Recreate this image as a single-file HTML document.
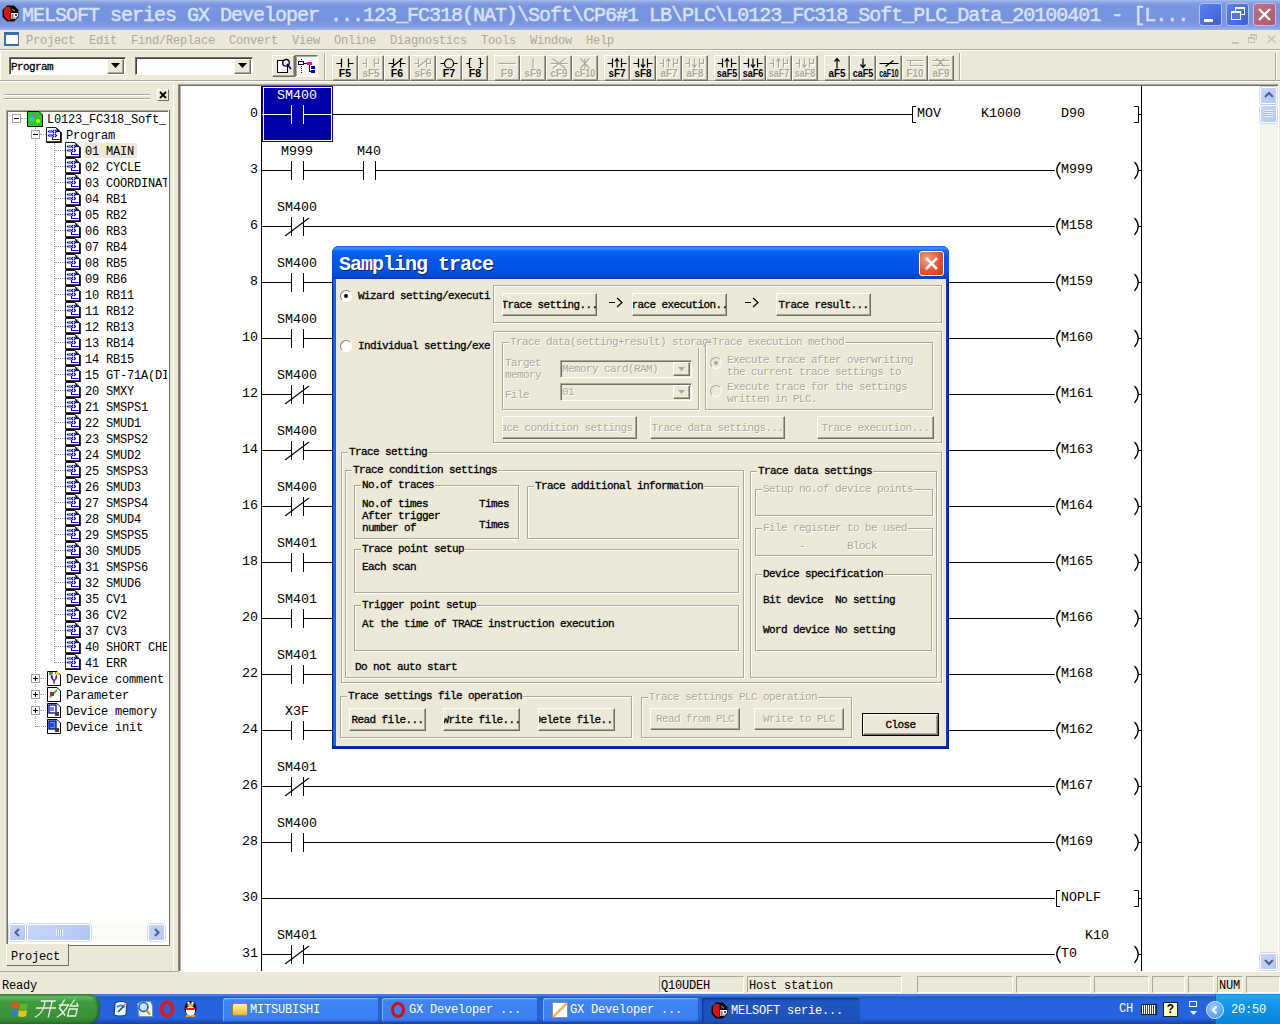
<!DOCTYPE html><html><head><meta charset="utf-8"><title>MELSOFT</title><style>
*{margin:0;padding:0;box-sizing:border-box}
html,body{width:1280px;height:1024px;overflow:hidden;background:#ECE9D8;position:relative;font-family:"Liberation Mono",monospace}
.a{position:absolute}
.t{position:absolute;white-space:pre;line-height:16px}
.raised{position:absolute;background:#ECE9D8;border:1px solid;border-color:#fff #716F64 #716F64 #fff;box-shadow:inset -1px -1px #ACA899}
.sunk{position:absolute;border:1px solid;border-color:#ACA899 #fff #fff #ACA899}
.grp{position:absolute;border:1px solid #ACA899;box-shadow:inset 1px 1px #fff,1px 1px #fff}
.gl{position:absolute;background:#ECE9D8;white-space:pre;line-height:12px;padding:0 1px}
.df{font-size:11px;letter-spacing:-0.6px;-webkit-text-stroke:0.3px currentColor}
.dis{color:#ACA899;text-shadow:1px 1px #fff;-webkit-text-stroke:0}
.lad{font-size:13.33px;letter-spacing:0;color:#000}
.tr{font-size:12px;letter-spacing:-0.2px}
</style></head><body>
<div class="a" style="left:0;top:0;width:1280px;height:30px;background:linear-gradient(#A8BCEB 0,#8CA7E4 2px,#7A96DF 5px,#7592DE 20px,#809BE2 26px,#96AEE8 29px)"></div>
<svg class="a" style="left:2px;top:5px" width="17" height="17"><path d="M5 0.5H12L16.5 5V12L12 16.5H5L0.5 12V5Z" fill="#100808"/><path d="M4 2H8.5V15H6L2 11V5Z" fill="#E01010"/><path d="M9 8H16V11L13 14H9Z" fill="#F4F0EC"/><rect x="9.5" y="9" width="2" height="5" fill="#7080A0"/><circle cx="14" cy="10" r="1" fill="#101010"/><path d="M12 12.5L14 14" stroke="#C08020" stroke-width="1.5"/><path d="M10 4L13 6" stroke="#80C080"/></svg>
<div class="t" style="left:22px;top:4px;line-height:24px;font-size:20px;letter-spacing:-1px;-webkit-text-stroke:0.5px #D8E2F8;color:#D8E2F8">MELSOFT series GX Developer ...123_FC318(NAT)\Soft\CP6#1 LB\PLC\L0123_FC318_Soft_PLC_Data_20100401 - [L...</div>
<div class="a" style="left:1199px;top:3px;width:23px;height:23px;border-radius:3px;border:1px solid #B0C2EE;background:linear-gradient(135deg,#5A80EA,#3C60D8)"></div>
<div class="a" style="left:1226px;top:3px;width:23px;height:23px;border-radius:3px;border:1px solid #B0C2EE;background:linear-gradient(135deg,#5A80EA,#3C60D8)"></div>
<div class="a" style="left:1253px;top:3px;width:23px;height:23px;border-radius:3px;border:1px solid #B0C2EE;background:linear-gradient(135deg,#C87080,#B05868)"></div>
<div class="a" style="left:1204px;top:19px;width:9px;height:3px;background:#fff"></div>
<div class="a" style="left:1235px;top:7px;width:10px;height:8px;border:1px solid #fff;border-top-width:2px"></div>
<div class="a" style="left:1231px;top:11px;width:10px;height:9px;border:1px solid #fff;border-top-width:2px;background:#5676D8"></div>
<svg class="a" style="left:1253px;top:3px" width="23" height="23"><path d="M6 6L17 17M17 6L6 17" stroke="#fff" stroke-width="2.4"/></svg>
<div class="a" style="left:4px;top:32px;width:15px;height:14px;background:#fff;border:2px solid #3A6EA5;border-top-width:3px;border-right-width:1px;border-bottom-width:2px"></div>
<div class="t tr" style="left:26px;top:33px;color:#ACA899">Project  Edit  Find/Replace  Convert  View  Online  Diagnostics  Tools  Window  Help</div>
<div class="a" style="left:1232px;top:42px;width:7px;height:2px;background:#C8C4B4"></div>
<div class="a" style="left:1250px;top:34px;width:7px;height:6px;border:1px solid #C8C4B4;border-top-width:2px"></div>
<div class="a" style="left:1248px;top:37px;width:7px;height:6px;border:1px solid #C8C4B4;border-top-width:2px;background:#ECE9D8"></div>
<svg class="a" style="left:1266px;top:34px" width="11" height="10"><path d="M1.5 1.5L9.5 8.5M9.5 1.5L1.5 8.5" stroke="#C8C4B4" stroke-width="1.6"/></svg>
<div class="a" style="left:0;top:49px;width:1280px;height:1px;background:#ACA899"></div>
<div class="a" style="left:0;top:50px;width:1280px;height:1px;background:#fff"></div>
<div class="a" style="left:0;top:80px;width:1280px;height:1px;background:#ACA899"></div>
<div class="a" style="left:0;top:81px;width:1280px;height:1px;background:#fff"></div>
<div class="a" style="left:0;top:52px;width:1px;height:28px;background:#fff"></div>
<div class="a" style="left:9px;top:57px;width:117px;height:18px;background:#fff;border:1px solid;border-color:#716F64 #fff #fff #716F64;box-shadow:inset 1px 1px #404040"></div>
<div class="raised" style="left:107px;top:59px;width:17px;height:15px"></div>
<svg class="a" style="left:111px;top:63px" width="9" height="6"><path d="M0 0H9L4.5 5Z" fill="#000"/></svg>
<div class="t df" style="left:11px;top:61px;line-height:12px;color:#000">Program</div>
<div class="a" style="left:135px;top:57px;width:118px;height:18px;background:#fff;border:1px solid;border-color:#716F64 #fff #fff #716F64;box-shadow:inset 1px 1px #404040"></div>
<div class="raised" style="left:234px;top:59px;width:17px;height:15px"></div>
<svg class="a" style="left:238px;top:63px" width="9" height="6"><path d="M0 0H9L4.5 5Z" fill="#000"/></svg>
<div class="raised" style="left:272px;top:55px;width:23px;height:22px"></div>
<svg class="a" style="left:272px;top:55px" width="23" height="22" shape-rendering="crispEdges"><rect x="5.5" y="5.5" width="10" height="12" fill="#fff" stroke="#000" stroke-width="1.6"/><circle cx="14" cy="7.8" r="3.3" fill="#fff" stroke="#000040" stroke-width="1.4" shape-rendering="auto"/><path d="M15 9L19 14" stroke="#000040" stroke-width="1.6" shape-rendering="auto"/></svg>
<div class="a" style="left:295px;top:55px;width:23px;height:22px;border:1px solid;border-color:#716F64 #fff #fff #716F64;box-shadow:inset 1px 1px #ACA899;background:repeating-conic-gradient(#F4F2EA 0 25%,#fff 0 50%) 0 0/2px 2px"></div>
<svg class="a" style="left:295px;top:55px" width="23" height="22" shape-rendering="crispEdges"><path d="M6 4h1v1h-1zM6 9h1v1h-1zM6 11h1v1h-1zM6 13h1v1h-1zM6 15h1v1h-1zM6 17h1v1h-1z" fill="#000040"/><rect x="3.5" y="6.5" width="5" height="3" fill="#fff" stroke="#000060"/><path d="M9 8H12" stroke="#000060"/><rect x="12" y="7" width="5" height="2.5" fill="#FF00CC"/><path d="M14.5 9.5V16.5H16" stroke="#000060" fill="none"/><rect x="16" y="11" width="4" height="3" fill="#0000C0"/><rect x="16" y="15" width="4" height="3" fill="#0000C0"/></svg>
<div class="a" style="left:324px;top:53px;width:1px;height:27px;background:#ACA899"></div>
<div class="a" style="left:325px;top:53px;width:1px;height:27px;background:#fff"></div>
<div class="raised" style="left:332px;top:55px;width:26px;height:26px"></div>
<svg class="a" style="left:333px;top:57px" width="24" height="12"><g transform="translate(0.5,0.5)"><path d="M3 6H8M8 1V10M15 1V10M15 6H20" stroke="#000" stroke-width="1.2" fill="none"/></g></svg>
<div class="t" style="left:332px;top:67px;width:26px;display:flex;justify-content:center;line-height:10px;font:bold 10.5px 'Liberation Sans', sans-serif;color:#000"><span style="display:inline-block;transform:scaleX(1.000)">F5</span></div>
<div class="raised" style="left:358px;top:55px;width:26px;height:26px"></div>
<svg class="a" style="left:359px;top:57px" width="24" height="12"><g transform="translate(0.5,0.5)"><g transform="translate(1,1)"><path d="M7 1V6H3M7 6V10M15 1V10M15 6H19V1" stroke="#fff" stroke-width="1.2" fill="none"/></g><path d="M7 1V6H3M7 6V10M15 1V10M15 6H19V1" stroke="#ACA899" stroke-width="1.2" fill="none"/></g></svg>
<div class="t" style="left:358px;top:67px;width:26px;display:flex;justify-content:center;line-height:10px;font:bold 10.5px 'Liberation Sans', sans-serif;color:#ACA899;text-shadow:1px 1px #fff"><span style="display:inline-block;transform:scaleX(0.940)">sF5</span></div>
<div class="raised" style="left:384px;top:55px;width:26px;height:26px"></div>
<svg class="a" style="left:385px;top:57px" width="24" height="12"><g transform="translate(0.5,0.5)"><path d="M3 6H8M8 1V10M15 1V10M15 6H20M6 10L17 1" stroke="#000" stroke-width="1.2" fill="none"/></g></svg>
<div class="t" style="left:384px;top:67px;width:26px;display:flex;justify-content:center;line-height:10px;font:bold 10.5px 'Liberation Sans', sans-serif;color:#000"><span style="display:inline-block;transform:scaleX(1.000)">F6</span></div>
<div class="raised" style="left:410px;top:55px;width:26px;height:26px"></div>
<svg class="a" style="left:411px;top:57px" width="24" height="12"><g transform="translate(0.5,0.5)"><g transform="translate(1,1)"><path d="M7 1V6H3M7 6V10M15 1V10M15 6H19V1M6 10L17 1" stroke="#fff" stroke-width="1.2" fill="none"/></g><path d="M7 1V6H3M7 6V10M15 1V10M15 6H19V1M6 10L17 1" stroke="#ACA899" stroke-width="1.2" fill="none"/></g></svg>
<div class="t" style="left:410px;top:67px;width:26px;display:flex;justify-content:center;line-height:10px;font:bold 10.5px 'Liberation Sans', sans-serif;color:#ACA899;text-shadow:1px 1px #fff"><span style="display:inline-block;transform:scaleX(0.940)">sF6</span></div>
<div class="raised" style="left:436px;top:55px;width:26px;height:26px"></div>
<svg class="a" style="left:437px;top:57px" width="24" height="12"><g transform="translate(0.5,0.5)"><path d="M3 6H7M16 6H20" stroke="#000" stroke-width="1.2" fill="none"/><circle cx="11.5" cy="6" r="4.5" stroke="#000" stroke-width="1.2" fill="none"/></g></svg>
<div class="t" style="left:436px;top:67px;width:26px;display:flex;justify-content:center;line-height:10px;font:bold 10.5px 'Liberation Sans', sans-serif;color:#000"><span style="display:inline-block;transform:scaleX(1.000)">F7</span></div>
<div class="raised" style="left:462px;top:55px;width:26px;height:26px"></div>
<svg class="a" style="left:463px;top:57px" width="24" height="12"><g transform="translate(0.5,0.5)"><path d="M3 6H6M6 1H8M6 1V10H8M15 1H17V10H15M17 6H20" stroke="#000" stroke-width="1.2" fill="none"/></g></svg>
<div class="t" style="left:462px;top:67px;width:26px;display:flex;justify-content:center;line-height:10px;font:bold 10.5px 'Liberation Sans', sans-serif;color:#000"><span style="display:inline-block;transform:scaleX(1.000)">F8</span></div>
<div class="raised" style="left:494px;top:55px;width:26px;height:26px"></div>
<svg class="a" style="left:495px;top:57px" width="24" height="12"><g transform="translate(0.5,0.5)"><g transform="translate(1,1)"><path d="M3 6H20" stroke="#fff" stroke-width="1.2" fill="none"/></g><path d="M3 6H20" stroke="#ACA899" stroke-width="1.2" fill="none"/></g></svg>
<div class="t" style="left:494px;top:67px;width:26px;display:flex;justify-content:center;line-height:10px;font:bold 10.5px 'Liberation Sans', sans-serif;color:#ACA899;text-shadow:1px 1px #fff"><span style="display:inline-block;transform:scaleX(1.000)">F9</span></div>
<div class="raised" style="left:520px;top:55px;width:26px;height:26px"></div>
<svg class="a" style="left:521px;top:57px" width="24" height="12"><g transform="translate(0.5,0.5)"><g transform="translate(1,1)"><path d="M11.5 1V11" stroke="#fff" stroke-width="1.2" fill="none"/></g><path d="M11.5 1V11" stroke="#ACA899" stroke-width="1.2" fill="none"/></g></svg>
<div class="t" style="left:520px;top:67px;width:26px;display:flex;justify-content:center;line-height:10px;font:bold 10.5px 'Liberation Sans', sans-serif;color:#ACA899;text-shadow:1px 1px #fff"><span style="display:inline-block;transform:scaleX(0.940)">sF9</span></div>
<div class="raised" style="left:546px;top:55px;width:26px;height:26px"></div>
<svg class="a" style="left:547px;top:57px" width="24" height="12"><g transform="translate(0.5,0.5)"><g transform="translate(1,1)"><path d="M3 6H20M5 1L18 11M5 11L18 1" stroke="#fff" stroke-width="1.2" fill="none"/></g><path d="M3 6H20M5 1L18 11M5 11L18 1" stroke="#ACA899" stroke-width="1.2" fill="none"/></g></svg>
<div class="t" style="left:546px;top:67px;width:26px;display:flex;justify-content:center;line-height:10px;font:bold 10.5px 'Liberation Sans', sans-serif;color:#ACA899;text-shadow:1px 1px #fff"><span style="display:inline-block;transform:scaleX(0.940)">cF9</span></div>
<div class="raised" style="left:572px;top:55px;width:26px;height:26px"></div>
<svg class="a" style="left:573px;top:57px" width="24" height="12"><g transform="translate(0.5,0.5)"><g transform="translate(1,1)"><path d="M7 1L16 11M7 11L16 1M11.5 1V11" stroke="#fff" stroke-width="1.2" fill="none"/></g><path d="M7 1L16 11M7 11L16 1M11.5 1V11" stroke="#ACA899" stroke-width="1.2" fill="none"/></g></svg>
<div class="t" style="left:572px;top:67px;width:26px;display:flex;justify-content:center;line-height:10px;font:bold 10.5px 'Liberation Sans', sans-serif;color:#ACA899;text-shadow:1px 1px #fff"><span style="display:inline-block;transform:scaleX(0.857)">cF10</span></div>
<div class="raised" style="left:604px;top:55px;width:26px;height:26px"></div>
<svg class="a" style="left:605px;top:57px" width="24" height="12"><g transform="translate(0.5,0.5)"><path d="M2 6H7M7 1V10M16 1V10M16 6H21M11.5 10V2M9.5 4L11.5 1L13.5 4" stroke="#000" stroke-width="1.2" fill="none"/></g></svg>
<div class="t" style="left:604px;top:67px;width:26px;display:flex;justify-content:center;line-height:10px;font:bold 10.5px 'Liberation Sans', sans-serif;color:#000"><span style="display:inline-block;transform:scaleX(0.940)">sF7</span></div>
<div class="raised" style="left:630px;top:55px;width:26px;height:26px"></div>
<svg class="a" style="left:631px;top:57px" width="24" height="12"><g transform="translate(0.5,0.5)"><path d="M2 6H7M7 1V10M16 1V10M16 6H21M11.5 1V9M9.5 7L11.5 10L13.5 7" stroke="#000" stroke-width="1.2" fill="none"/></g></svg>
<div class="t" style="left:630px;top:67px;width:26px;display:flex;justify-content:center;line-height:10px;font:bold 10.5px 'Liberation Sans', sans-serif;color:#000"><span style="display:inline-block;transform:scaleX(0.940)">sF8</span></div>
<div class="raised" style="left:656px;top:55px;width:26px;height:26px"></div>
<svg class="a" style="left:657px;top:57px" width="24" height="12"><g transform="translate(0.5,0.5)"><g transform="translate(1,1)"><path d="M6 1V6H2M6 6V10M16 1V10M16 6H20V1M11 10V2M9 4L11 1L13 4" stroke="#fff" stroke-width="1.2" fill="none"/></g><path d="M6 1V6H2M6 6V10M16 1V10M16 6H20V1M11 10V2M9 4L11 1L13 4" stroke="#ACA899" stroke-width="1.2" fill="none"/></g></svg>
<div class="t" style="left:656px;top:67px;width:26px;display:flex;justify-content:center;line-height:10px;font:bold 10.5px 'Liberation Sans', sans-serif;color:#ACA899;text-shadow:1px 1px #fff"><span style="display:inline-block;transform:scaleX(0.940)">aF7</span></div>
<div class="raised" style="left:682px;top:55px;width:26px;height:26px"></div>
<svg class="a" style="left:683px;top:57px" width="24" height="12"><g transform="translate(0.5,0.5)"><g transform="translate(1,1)"><path d="M6 1V6H2M6 6V10M16 1V10M16 6H20V1M11 1V9M9 7L11 10L13 7" stroke="#fff" stroke-width="1.2" fill="none"/></g><path d="M6 1V6H2M6 6V10M16 1V10M16 6H20V1M11 1V9M9 7L11 10L13 7" stroke="#ACA899" stroke-width="1.2" fill="none"/></g></svg>
<div class="t" style="left:682px;top:67px;width:26px;display:flex;justify-content:center;line-height:10px;font:bold 10.5px 'Liberation Sans', sans-serif;color:#ACA899;text-shadow:1px 1px #fff"><span style="display:inline-block;transform:scaleX(0.940)">aF8</span></div>
<div class="raised" style="left:714px;top:55px;width:26px;height:26px"></div>
<svg class="a" style="left:715px;top:57px" width="24" height="12"><g transform="translate(0.5,0.5)"><path d="M2 6H7M7 1V10M16 1V10M16 6H21M11.5 10V2M9.5 4L11.5 1L13.5 4" stroke="#000" stroke-width="1.2" fill="none"/></g></svg>
<div class="t" style="left:714px;top:67px;width:26px;display:flex;justify-content:center;line-height:10px;font:bold 10.5px 'Liberation Sans', sans-serif;color:#000"><span style="display:inline-block;transform:scaleX(0.857)">saF5</span></div>
<div class="raised" style="left:740px;top:55px;width:26px;height:26px"></div>
<svg class="a" style="left:741px;top:57px" width="24" height="12"><g transform="translate(0.5,0.5)"><path d="M2 6H7M7 1V10M16 1V10M16 6H21M11.5 1V9M9.5 7L11.5 10L13.5 7" stroke="#000" stroke-width="1.2" fill="none"/></g></svg>
<div class="t" style="left:740px;top:67px;width:26px;display:flex;justify-content:center;line-height:10px;font:bold 10.5px 'Liberation Sans', sans-serif;color:#000"><span style="display:inline-block;transform:scaleX(0.857)">saF6</span></div>
<div class="raised" style="left:766px;top:55px;width:26px;height:26px"></div>
<svg class="a" style="left:767px;top:57px" width="24" height="12"><g transform="translate(0.5,0.5)"><g transform="translate(1,1)"><path d="M6 1V6H2M6 6V10M16 1V10M16 6H20V1M11 10V2M9 4L11 1L13 4" stroke="#fff" stroke-width="1.2" fill="none"/></g><path d="M6 1V6H2M6 6V10M16 1V10M16 6H20V1M11 10V2M9 4L11 1L13 4" stroke="#ACA899" stroke-width="1.2" fill="none"/></g></svg>
<div class="t" style="left:766px;top:67px;width:26px;display:flex;justify-content:center;line-height:10px;font:bold 10.5px 'Liberation Sans', sans-serif;color:#ACA899;text-shadow:1px 1px #fff"><span style="display:inline-block;transform:scaleX(0.857)">saF7</span></div>
<div class="raised" style="left:792px;top:55px;width:26px;height:26px"></div>
<svg class="a" style="left:793px;top:57px" width="24" height="12"><g transform="translate(0.5,0.5)"><g transform="translate(1,1)"><path d="M6 1V6H2M6 6V10M16 1V10M16 6H20V1M11 1V9M9 7L11 10L13 7" stroke="#fff" stroke-width="1.2" fill="none"/></g><path d="M6 1V6H2M6 6V10M16 1V10M16 6H20V1M11 1V9M9 7L11 10L13 7" stroke="#ACA899" stroke-width="1.2" fill="none"/></g></svg>
<div class="t" style="left:792px;top:67px;width:26px;display:flex;justify-content:center;line-height:10px;font:bold 10.5px 'Liberation Sans', sans-serif;color:#ACA899;text-shadow:1px 1px #fff"><span style="display:inline-block;transform:scaleX(0.857)">saF8</span></div>
<div class="raised" style="left:824px;top:55px;width:26px;height:26px"></div>
<svg class="a" style="left:825px;top:57px" width="24" height="12"><g transform="translate(0.5,0.5)"><path d="M11.5 11V1M9 4L11.5 1L14 4" stroke="#000" stroke-width="1.2" fill="none"/></g></svg>
<div class="t" style="left:824px;top:67px;width:26px;display:flex;justify-content:center;line-height:10px;font:bold 10.5px 'Liberation Sans', sans-serif;color:#000"><span style="display:inline-block;transform:scaleX(0.940)">aF5</span></div>
<div class="raised" style="left:850px;top:55px;width:26px;height:26px"></div>
<svg class="a" style="left:851px;top:57px" width="24" height="12"><g transform="translate(0.5,0.5)"><path d="M11.5 1V10M9 7L11.5 10L14 7" stroke="#000" stroke-width="1.2" fill="none"/></g></svg>
<div class="t" style="left:850px;top:67px;width:26px;display:flex;justify-content:center;line-height:10px;font:bold 10.5px 'Liberation Sans', sans-serif;color:#000"><span style="display:inline-block;transform:scaleX(0.857)">caF5</span></div>
<div class="raised" style="left:876px;top:55px;width:26px;height:26px"></div>
<svg class="a" style="left:877px;top:57px" width="24" height="12"><g transform="translate(0.5,0.5)"><path d="M2 6H21M8 9L16 3" stroke="#000" stroke-width="1.2" fill="none"/></g></svg>
<div class="t" style="left:876px;top:67px;width:26px;display:flex;justify-content:center;line-height:10px;font:bold 10.5px 'Liberation Sans', sans-serif;color:#000"><span style="display:inline-block;transform:scaleX(0.655)">caF10</span></div>
<div class="raised" style="left:902px;top:55px;width:26px;height:26px"></div>
<svg class="a" style="left:903px;top:57px" width="24" height="12"><g transform="translate(0.5,0.5)"><g transform="translate(1,1)"><path d="M3 3H20M7 3V8H20" stroke="#fff" stroke-width="1.2" fill="none"/></g><path d="M3 3H20M7 3V8H20" stroke="#ACA899" stroke-width="1.2" fill="none"/></g></svg>
<div class="t" style="left:902px;top:67px;width:26px;display:flex;justify-content:center;line-height:10px;font:bold 10.5px 'Liberation Sans', sans-serif;color:#ACA899;text-shadow:1px 1px #fff"><span style="display:inline-block;transform:scaleX(0.940)">F10</span></div>
<div class="raised" style="left:928px;top:55px;width:26px;height:26px"></div>
<svg class="a" style="left:929px;top:57px" width="24" height="12"><g transform="translate(0.5,0.5)"><g transform="translate(1,1)"><path d="M3 3H20M7 1L15 9M15 1L7 9M3 8H20" stroke="#fff" stroke-width="1.2" fill="none"/></g><path d="M3 3H20M7 1L15 9M15 1L7 9M3 8H20" stroke="#ACA899" stroke-width="1.2" fill="none"/></g></svg>
<div class="t" style="left:928px;top:67px;width:26px;display:flex;justify-content:center;line-height:10px;font:bold 10.5px 'Liberation Sans', sans-serif;color:#ACA899;text-shadow:1px 1px #fff"><span style="display:inline-block;transform:scaleX(0.940)">aF9</span></div>
<div class="a" style="left:959px;top:53px;width:1px;height:27px;background:#ACA899"></div>
<div class="a" style="left:960px;top:53px;width:1px;height:27px;background:#fff"></div>
<div class="a" style="left:1275px;top:53px;width:1px;height:27px;background:#ACA899"></div>
<div class="a" style="left:1276px;top:53px;width:1px;height:27px;background:#fff"></div>
<div class="a" style="left:4px;top:94px;width:146px;height:1px;background:#ACA899"></div>
<div class="a" style="left:4px;top:95px;width:146px;height:1px;background:#fff"></div>
<div class="a" style="left:4px;top:98px;width:146px;height:1px;background:#ACA899"></div>
<div class="a" style="left:4px;top:99px;width:146px;height:1px;background:#fff"></div>
<div class="raised" style="left:157px;top:89px;width:12px;height:12px;box-shadow:none"></div>
<svg class="a" style="left:158px;top:90px" width="10" height="10"><path d="M2 2L8 8M8 2L2 8" stroke="#000" stroke-width="1.8"/></svg>
<div class="a" style="left:6px;top:110px;width:163px;height:835px;background:#fff;border:1px solid;border-color:#ACA899 #fff #fff #ACA899;box-shadow:inset 1px 1px #716F64"></div>
<div class="a" style="left:35px;top:127px;width:0;height:600px;border-left:1px dotted #A0A0A0"></div>
<div class="a" style="left:54px;top:143px;width:0;height:520px;border-left:1px dotted #A0A0A0"></div>
<div class="a" style="left:21px;top:118px;width:6px;height:0;border-top:1px dotted #A0A0A0"></div>
<div class="a" style="left:12px;top:114px;width:9px;height:9px;border:1px solid #A0A0A0;background:#fff"></div>
<div class="a" style="left:14px;top:118px;width:5px;height:1px;background:#000"></div>
<svg class="a" style="left:27px;top:111px" width="16" height="16"><path d="M0.5 0.5H12L15.5 4V15.5H0.5Z" fill="#22D022" stroke="#000"/><path d="M2 8L5 5L8 8L5 11Z" fill="#30C0E0"/><circle cx="7" cy="4" r="1.8" fill="#E040E0"/><circle cx="11" cy="10" r="2" fill="#F0E020"/></svg>
<div class="t tr" style="left:47px;top:112px;color:#000">L0123_FC318_Soft_</div>
<div class="a" style="left:31px;top:130px;width:9px;height:9px;border:1px solid #A0A0A0;background:#fff"></div>
<div class="a" style="left:33px;top:134px;width:5px;height:1px;background:#000"></div>
<div class="a" style="left:40px;top:134px;width:6px;height:0;border-top:1px dotted #A0A0A0"></div>
<svg class="a" style="left:46px;top:127px" width="16" height="16"><path d="M0.5 0.5H10L14.5 5V15.5H0.5Z" fill="#fff" stroke="#202020"/><path d="M1 15H15.5M15 5V16" stroke="#000" stroke-width="1.6"/><path d="M10 0.5L14.5 5H11Z" fill="#000"/><g fill="#0000C8"><path d="M1.5 4.5L3.5 2.8V6.2Z"/><path d="M1.5 8.5L3.5 6.8V10.2Z"/><rect x="4.5" y="3" width="1" height="3"/><rect x="4.5" y="7" width="1" height="3"/></g><path d="M8 3L6.5 4.5L8 6M9 3L10.5 4.5L9 6M11 4.5H13.5M8 7L6.5 8.5L8 10M9 7L10.5 8.5L9 10M6.5 10V12.5H13.5" stroke="#0000C8" stroke-width="1.1" fill="none"/></svg>
<div class="t tr" style="left:66px;top:128px;color:#000">Program</div>
<div class="a" style="left:55px;top:150px;width:10px;height:0;border-top:1px dotted #A0A0A0"></div>
<svg class="a" style="left:65px;top:142px" width="16" height="16"><path d="M0.5 0.5H10L14.5 5V15.5H0.5Z" fill="#fff" stroke="#202020"/><path d="M1 15H15.5M15 5V16" stroke="#000" stroke-width="1.6"/><path d="M10 0.5L14.5 5H11Z" fill="#000"/><g fill="#0000C8"><path d="M1.5 4.5L3.5 2.8V6.2Z"/><path d="M1.5 8.5L3.5 6.8V10.2Z"/><rect x="4.5" y="3" width="1" height="3"/><rect x="4.5" y="7" width="1" height="3"/></g><path d="M8 3L6.5 4.5L8 6M9 3L10.5 4.5L9 6M11 4.5H13.5M8 7L6.5 8.5L8 10M9 7L10.5 8.5L9 10M6.5 10V12.5H13.5" stroke="#0000C8" stroke-width="1.1" fill="none"/></svg>
<div class="a" style="left:84px;top:143px;width:53px;height:15px;background:#ECE9D8"></div>
<div class="t tr" style="left:85px;top:144px;color:#000;width:82px;overflow:hidden">01 MAIN</div>
<div class="a" style="left:55px;top:166px;width:10px;height:0;border-top:1px dotted #A0A0A0"></div>
<svg class="a" style="left:65px;top:158px" width="16" height="16"><path d="M0.5 0.5H10L14.5 5V15.5H0.5Z" fill="#fff" stroke="#202020"/><path d="M1 15H15.5M15 5V16" stroke="#000" stroke-width="1.6"/><path d="M10 0.5L14.5 5H11Z" fill="#000"/><g fill="#0000C8"><path d="M1.5 4.5L3.5 2.8V6.2Z"/><path d="M1.5 8.5L3.5 6.8V10.2Z"/><rect x="4.5" y="3" width="1" height="3"/><rect x="4.5" y="7" width="1" height="3"/></g><path d="M8 3L6.5 4.5L8 6M9 3L10.5 4.5L9 6M11 4.5H13.5M8 7L6.5 8.5L8 10M9 7L10.5 8.5L9 10M6.5 10V12.5H13.5" stroke="#0000C8" stroke-width="1.1" fill="none"/></svg>
<div class="t tr" style="left:85px;top:160px;color:#000;width:82px;overflow:hidden">02 CYCLE</div>
<div class="a" style="left:55px;top:182px;width:10px;height:0;border-top:1px dotted #A0A0A0"></div>
<svg class="a" style="left:65px;top:174px" width="16" height="16"><path d="M0.5 0.5H10L14.5 5V15.5H0.5Z" fill="#fff" stroke="#202020"/><path d="M1 15H15.5M15 5V16" stroke="#000" stroke-width="1.6"/><path d="M10 0.5L14.5 5H11Z" fill="#000"/><g fill="#0000C8"><path d="M1.5 4.5L3.5 2.8V6.2Z"/><path d="M1.5 8.5L3.5 6.8V10.2Z"/><rect x="4.5" y="3" width="1" height="3"/><rect x="4.5" y="7" width="1" height="3"/></g><path d="M8 3L6.5 4.5L8 6M9 3L10.5 4.5L9 6M11 4.5H13.5M8 7L6.5 8.5L8 10M9 7L10.5 8.5L9 10M6.5 10V12.5H13.5" stroke="#0000C8" stroke-width="1.1" fill="none"/></svg>
<div class="t tr" style="left:85px;top:176px;color:#000;width:82px;overflow:hidden">03 COORDINAT</div>
<div class="a" style="left:55px;top:198px;width:10px;height:0;border-top:1px dotted #A0A0A0"></div>
<svg class="a" style="left:65px;top:190px" width="16" height="16"><path d="M0.5 0.5H10L14.5 5V15.5H0.5Z" fill="#fff" stroke="#202020"/><path d="M1 15H15.5M15 5V16" stroke="#000" stroke-width="1.6"/><path d="M10 0.5L14.5 5H11Z" fill="#000"/><g fill="#0000C8"><path d="M1.5 4.5L3.5 2.8V6.2Z"/><path d="M1.5 8.5L3.5 6.8V10.2Z"/><rect x="4.5" y="3" width="1" height="3"/><rect x="4.5" y="7" width="1" height="3"/></g><path d="M8 3L6.5 4.5L8 6M9 3L10.5 4.5L9 6M11 4.5H13.5M8 7L6.5 8.5L8 10M9 7L10.5 8.5L9 10M6.5 10V12.5H13.5" stroke="#0000C8" stroke-width="1.1" fill="none"/></svg>
<div class="t tr" style="left:85px;top:192px;color:#000;width:82px;overflow:hidden">04 RB1</div>
<div class="a" style="left:55px;top:214px;width:10px;height:0;border-top:1px dotted #A0A0A0"></div>
<svg class="a" style="left:65px;top:206px" width="16" height="16"><path d="M0.5 0.5H10L14.5 5V15.5H0.5Z" fill="#fff" stroke="#202020"/><path d="M1 15H15.5M15 5V16" stroke="#000" stroke-width="1.6"/><path d="M10 0.5L14.5 5H11Z" fill="#000"/><g fill="#0000C8"><path d="M1.5 4.5L3.5 2.8V6.2Z"/><path d="M1.5 8.5L3.5 6.8V10.2Z"/><rect x="4.5" y="3" width="1" height="3"/><rect x="4.5" y="7" width="1" height="3"/></g><path d="M8 3L6.5 4.5L8 6M9 3L10.5 4.5L9 6M11 4.5H13.5M8 7L6.5 8.5L8 10M9 7L10.5 8.5L9 10M6.5 10V12.5H13.5" stroke="#0000C8" stroke-width="1.1" fill="none"/></svg>
<div class="t tr" style="left:85px;top:208px;color:#000;width:82px;overflow:hidden">05 RB2</div>
<div class="a" style="left:55px;top:230px;width:10px;height:0;border-top:1px dotted #A0A0A0"></div>
<svg class="a" style="left:65px;top:222px" width="16" height="16"><path d="M0.5 0.5H10L14.5 5V15.5H0.5Z" fill="#fff" stroke="#202020"/><path d="M1 15H15.5M15 5V16" stroke="#000" stroke-width="1.6"/><path d="M10 0.5L14.5 5H11Z" fill="#000"/><g fill="#0000C8"><path d="M1.5 4.5L3.5 2.8V6.2Z"/><path d="M1.5 8.5L3.5 6.8V10.2Z"/><rect x="4.5" y="3" width="1" height="3"/><rect x="4.5" y="7" width="1" height="3"/></g><path d="M8 3L6.5 4.5L8 6M9 3L10.5 4.5L9 6M11 4.5H13.5M8 7L6.5 8.5L8 10M9 7L10.5 8.5L9 10M6.5 10V12.5H13.5" stroke="#0000C8" stroke-width="1.1" fill="none"/></svg>
<div class="t tr" style="left:85px;top:224px;color:#000;width:82px;overflow:hidden">06 RB3</div>
<div class="a" style="left:55px;top:246px;width:10px;height:0;border-top:1px dotted #A0A0A0"></div>
<svg class="a" style="left:65px;top:238px" width="16" height="16"><path d="M0.5 0.5H10L14.5 5V15.5H0.5Z" fill="#fff" stroke="#202020"/><path d="M1 15H15.5M15 5V16" stroke="#000" stroke-width="1.6"/><path d="M10 0.5L14.5 5H11Z" fill="#000"/><g fill="#0000C8"><path d="M1.5 4.5L3.5 2.8V6.2Z"/><path d="M1.5 8.5L3.5 6.8V10.2Z"/><rect x="4.5" y="3" width="1" height="3"/><rect x="4.5" y="7" width="1" height="3"/></g><path d="M8 3L6.5 4.5L8 6M9 3L10.5 4.5L9 6M11 4.5H13.5M8 7L6.5 8.5L8 10M9 7L10.5 8.5L9 10M6.5 10V12.5H13.5" stroke="#0000C8" stroke-width="1.1" fill="none"/></svg>
<div class="t tr" style="left:85px;top:240px;color:#000;width:82px;overflow:hidden">07 RB4</div>
<div class="a" style="left:55px;top:262px;width:10px;height:0;border-top:1px dotted #A0A0A0"></div>
<svg class="a" style="left:65px;top:254px" width="16" height="16"><path d="M0.5 0.5H10L14.5 5V15.5H0.5Z" fill="#fff" stroke="#202020"/><path d="M1 15H15.5M15 5V16" stroke="#000" stroke-width="1.6"/><path d="M10 0.5L14.5 5H11Z" fill="#000"/><g fill="#0000C8"><path d="M1.5 4.5L3.5 2.8V6.2Z"/><path d="M1.5 8.5L3.5 6.8V10.2Z"/><rect x="4.5" y="3" width="1" height="3"/><rect x="4.5" y="7" width="1" height="3"/></g><path d="M8 3L6.5 4.5L8 6M9 3L10.5 4.5L9 6M11 4.5H13.5M8 7L6.5 8.5L8 10M9 7L10.5 8.5L9 10M6.5 10V12.5H13.5" stroke="#0000C8" stroke-width="1.1" fill="none"/></svg>
<div class="t tr" style="left:85px;top:256px;color:#000;width:82px;overflow:hidden">08 RB5</div>
<div class="a" style="left:55px;top:278px;width:10px;height:0;border-top:1px dotted #A0A0A0"></div>
<svg class="a" style="left:65px;top:270px" width="16" height="16"><path d="M0.5 0.5H10L14.5 5V15.5H0.5Z" fill="#fff" stroke="#202020"/><path d="M1 15H15.5M15 5V16" stroke="#000" stroke-width="1.6"/><path d="M10 0.5L14.5 5H11Z" fill="#000"/><g fill="#0000C8"><path d="M1.5 4.5L3.5 2.8V6.2Z"/><path d="M1.5 8.5L3.5 6.8V10.2Z"/><rect x="4.5" y="3" width="1" height="3"/><rect x="4.5" y="7" width="1" height="3"/></g><path d="M8 3L6.5 4.5L8 6M9 3L10.5 4.5L9 6M11 4.5H13.5M8 7L6.5 8.5L8 10M9 7L10.5 8.5L9 10M6.5 10V12.5H13.5" stroke="#0000C8" stroke-width="1.1" fill="none"/></svg>
<div class="t tr" style="left:85px;top:272px;color:#000;width:82px;overflow:hidden">09 RB6</div>
<div class="a" style="left:55px;top:294px;width:10px;height:0;border-top:1px dotted #A0A0A0"></div>
<svg class="a" style="left:65px;top:286px" width="16" height="16"><path d="M0.5 0.5H10L14.5 5V15.5H0.5Z" fill="#fff" stroke="#202020"/><path d="M1 15H15.5M15 5V16" stroke="#000" stroke-width="1.6"/><path d="M10 0.5L14.5 5H11Z" fill="#000"/><g fill="#0000C8"><path d="M1.5 4.5L3.5 2.8V6.2Z"/><path d="M1.5 8.5L3.5 6.8V10.2Z"/><rect x="4.5" y="3" width="1" height="3"/><rect x="4.5" y="7" width="1" height="3"/></g><path d="M8 3L6.5 4.5L8 6M9 3L10.5 4.5L9 6M11 4.5H13.5M8 7L6.5 8.5L8 10M9 7L10.5 8.5L9 10M6.5 10V12.5H13.5" stroke="#0000C8" stroke-width="1.1" fill="none"/></svg>
<div class="t tr" style="left:85px;top:288px;color:#000;width:82px;overflow:hidden">10 RB11</div>
<div class="a" style="left:55px;top:310px;width:10px;height:0;border-top:1px dotted #A0A0A0"></div>
<svg class="a" style="left:65px;top:302px" width="16" height="16"><path d="M0.5 0.5H10L14.5 5V15.5H0.5Z" fill="#fff" stroke="#202020"/><path d="M1 15H15.5M15 5V16" stroke="#000" stroke-width="1.6"/><path d="M10 0.5L14.5 5H11Z" fill="#000"/><g fill="#0000C8"><path d="M1.5 4.5L3.5 2.8V6.2Z"/><path d="M1.5 8.5L3.5 6.8V10.2Z"/><rect x="4.5" y="3" width="1" height="3"/><rect x="4.5" y="7" width="1" height="3"/></g><path d="M8 3L6.5 4.5L8 6M9 3L10.5 4.5L9 6M11 4.5H13.5M8 7L6.5 8.5L8 10M9 7L10.5 8.5L9 10M6.5 10V12.5H13.5" stroke="#0000C8" stroke-width="1.1" fill="none"/></svg>
<div class="t tr" style="left:85px;top:304px;color:#000;width:82px;overflow:hidden">11 RB12</div>
<div class="a" style="left:55px;top:326px;width:10px;height:0;border-top:1px dotted #A0A0A0"></div>
<svg class="a" style="left:65px;top:318px" width="16" height="16"><path d="M0.5 0.5H10L14.5 5V15.5H0.5Z" fill="#fff" stroke="#202020"/><path d="M1 15H15.5M15 5V16" stroke="#000" stroke-width="1.6"/><path d="M10 0.5L14.5 5H11Z" fill="#000"/><g fill="#0000C8"><path d="M1.5 4.5L3.5 2.8V6.2Z"/><path d="M1.5 8.5L3.5 6.8V10.2Z"/><rect x="4.5" y="3" width="1" height="3"/><rect x="4.5" y="7" width="1" height="3"/></g><path d="M8 3L6.5 4.5L8 6M9 3L10.5 4.5L9 6M11 4.5H13.5M8 7L6.5 8.5L8 10M9 7L10.5 8.5L9 10M6.5 10V12.5H13.5" stroke="#0000C8" stroke-width="1.1" fill="none"/></svg>
<div class="t tr" style="left:85px;top:320px;color:#000;width:82px;overflow:hidden">12 RB13</div>
<div class="a" style="left:55px;top:342px;width:10px;height:0;border-top:1px dotted #A0A0A0"></div>
<svg class="a" style="left:65px;top:334px" width="16" height="16"><path d="M0.5 0.5H10L14.5 5V15.5H0.5Z" fill="#fff" stroke="#202020"/><path d="M1 15H15.5M15 5V16" stroke="#000" stroke-width="1.6"/><path d="M10 0.5L14.5 5H11Z" fill="#000"/><g fill="#0000C8"><path d="M1.5 4.5L3.5 2.8V6.2Z"/><path d="M1.5 8.5L3.5 6.8V10.2Z"/><rect x="4.5" y="3" width="1" height="3"/><rect x="4.5" y="7" width="1" height="3"/></g><path d="M8 3L6.5 4.5L8 6M9 3L10.5 4.5L9 6M11 4.5H13.5M8 7L6.5 8.5L8 10M9 7L10.5 8.5L9 10M6.5 10V12.5H13.5" stroke="#0000C8" stroke-width="1.1" fill="none"/></svg>
<div class="t tr" style="left:85px;top:336px;color:#000;width:82px;overflow:hidden">13 RB14</div>
<div class="a" style="left:55px;top:358px;width:10px;height:0;border-top:1px dotted #A0A0A0"></div>
<svg class="a" style="left:65px;top:350px" width="16" height="16"><path d="M0.5 0.5H10L14.5 5V15.5H0.5Z" fill="#fff" stroke="#202020"/><path d="M1 15H15.5M15 5V16" stroke="#000" stroke-width="1.6"/><path d="M10 0.5L14.5 5H11Z" fill="#000"/><g fill="#0000C8"><path d="M1.5 4.5L3.5 2.8V6.2Z"/><path d="M1.5 8.5L3.5 6.8V10.2Z"/><rect x="4.5" y="3" width="1" height="3"/><rect x="4.5" y="7" width="1" height="3"/></g><path d="M8 3L6.5 4.5L8 6M9 3L10.5 4.5L9 6M11 4.5H13.5M8 7L6.5 8.5L8 10M9 7L10.5 8.5L9 10M6.5 10V12.5H13.5" stroke="#0000C8" stroke-width="1.1" fill="none"/></svg>
<div class="t tr" style="left:85px;top:352px;color:#000;width:82px;overflow:hidden">14 RB15</div>
<div class="a" style="left:55px;top:374px;width:10px;height:0;border-top:1px dotted #A0A0A0"></div>
<svg class="a" style="left:65px;top:366px" width="16" height="16"><path d="M0.5 0.5H10L14.5 5V15.5H0.5Z" fill="#fff" stroke="#202020"/><path d="M1 15H15.5M15 5V16" stroke="#000" stroke-width="1.6"/><path d="M10 0.5L14.5 5H11Z" fill="#000"/><g fill="#0000C8"><path d="M1.5 4.5L3.5 2.8V6.2Z"/><path d="M1.5 8.5L3.5 6.8V10.2Z"/><rect x="4.5" y="3" width="1" height="3"/><rect x="4.5" y="7" width="1" height="3"/></g><path d="M8 3L6.5 4.5L8 6M9 3L10.5 4.5L9 6M11 4.5H13.5M8 7L6.5 8.5L8 10M9 7L10.5 8.5L9 10M6.5 10V12.5H13.5" stroke="#0000C8" stroke-width="1.1" fill="none"/></svg>
<div class="t tr" style="left:85px;top:368px;color:#000;width:82px;overflow:hidden">15 GT-71A(DI</div>
<div class="a" style="left:55px;top:390px;width:10px;height:0;border-top:1px dotted #A0A0A0"></div>
<svg class="a" style="left:65px;top:382px" width="16" height="16"><path d="M0.5 0.5H10L14.5 5V15.5H0.5Z" fill="#fff" stroke="#202020"/><path d="M1 15H15.5M15 5V16" stroke="#000" stroke-width="1.6"/><path d="M10 0.5L14.5 5H11Z" fill="#000"/><g fill="#0000C8"><path d="M1.5 4.5L3.5 2.8V6.2Z"/><path d="M1.5 8.5L3.5 6.8V10.2Z"/><rect x="4.5" y="3" width="1" height="3"/><rect x="4.5" y="7" width="1" height="3"/></g><path d="M8 3L6.5 4.5L8 6M9 3L10.5 4.5L9 6M11 4.5H13.5M8 7L6.5 8.5L8 10M9 7L10.5 8.5L9 10M6.5 10V12.5H13.5" stroke="#0000C8" stroke-width="1.1" fill="none"/></svg>
<div class="t tr" style="left:85px;top:384px;color:#000;width:82px;overflow:hidden">20 SMXY</div>
<div class="a" style="left:55px;top:406px;width:10px;height:0;border-top:1px dotted #A0A0A0"></div>
<svg class="a" style="left:65px;top:398px" width="16" height="16"><path d="M0.5 0.5H10L14.5 5V15.5H0.5Z" fill="#fff" stroke="#202020"/><path d="M1 15H15.5M15 5V16" stroke="#000" stroke-width="1.6"/><path d="M10 0.5L14.5 5H11Z" fill="#000"/><g fill="#0000C8"><path d="M1.5 4.5L3.5 2.8V6.2Z"/><path d="M1.5 8.5L3.5 6.8V10.2Z"/><rect x="4.5" y="3" width="1" height="3"/><rect x="4.5" y="7" width="1" height="3"/></g><path d="M8 3L6.5 4.5L8 6M9 3L10.5 4.5L9 6M11 4.5H13.5M8 7L6.5 8.5L8 10M9 7L10.5 8.5L9 10M6.5 10V12.5H13.5" stroke="#0000C8" stroke-width="1.1" fill="none"/></svg>
<div class="t tr" style="left:85px;top:400px;color:#000;width:82px;overflow:hidden">21 SMSPS1</div>
<div class="a" style="left:55px;top:422px;width:10px;height:0;border-top:1px dotted #A0A0A0"></div>
<svg class="a" style="left:65px;top:414px" width="16" height="16"><path d="M0.5 0.5H10L14.5 5V15.5H0.5Z" fill="#fff" stroke="#202020"/><path d="M1 15H15.5M15 5V16" stroke="#000" stroke-width="1.6"/><path d="M10 0.5L14.5 5H11Z" fill="#000"/><g fill="#0000C8"><path d="M1.5 4.5L3.5 2.8V6.2Z"/><path d="M1.5 8.5L3.5 6.8V10.2Z"/><rect x="4.5" y="3" width="1" height="3"/><rect x="4.5" y="7" width="1" height="3"/></g><path d="M8 3L6.5 4.5L8 6M9 3L10.5 4.5L9 6M11 4.5H13.5M8 7L6.5 8.5L8 10M9 7L10.5 8.5L9 10M6.5 10V12.5H13.5" stroke="#0000C8" stroke-width="1.1" fill="none"/></svg>
<div class="t tr" style="left:85px;top:416px;color:#000;width:82px;overflow:hidden">22 SMUD1</div>
<div class="a" style="left:55px;top:438px;width:10px;height:0;border-top:1px dotted #A0A0A0"></div>
<svg class="a" style="left:65px;top:430px" width="16" height="16"><path d="M0.5 0.5H10L14.5 5V15.5H0.5Z" fill="#fff" stroke="#202020"/><path d="M1 15H15.5M15 5V16" stroke="#000" stroke-width="1.6"/><path d="M10 0.5L14.5 5H11Z" fill="#000"/><g fill="#0000C8"><path d="M1.5 4.5L3.5 2.8V6.2Z"/><path d="M1.5 8.5L3.5 6.8V10.2Z"/><rect x="4.5" y="3" width="1" height="3"/><rect x="4.5" y="7" width="1" height="3"/></g><path d="M8 3L6.5 4.5L8 6M9 3L10.5 4.5L9 6M11 4.5H13.5M8 7L6.5 8.5L8 10M9 7L10.5 8.5L9 10M6.5 10V12.5H13.5" stroke="#0000C8" stroke-width="1.1" fill="none"/></svg>
<div class="t tr" style="left:85px;top:432px;color:#000;width:82px;overflow:hidden">23 SMSPS2</div>
<div class="a" style="left:55px;top:454px;width:10px;height:0;border-top:1px dotted #A0A0A0"></div>
<svg class="a" style="left:65px;top:446px" width="16" height="16"><path d="M0.5 0.5H10L14.5 5V15.5H0.5Z" fill="#fff" stroke="#202020"/><path d="M1 15H15.5M15 5V16" stroke="#000" stroke-width="1.6"/><path d="M10 0.5L14.5 5H11Z" fill="#000"/><g fill="#0000C8"><path d="M1.5 4.5L3.5 2.8V6.2Z"/><path d="M1.5 8.5L3.5 6.8V10.2Z"/><rect x="4.5" y="3" width="1" height="3"/><rect x="4.5" y="7" width="1" height="3"/></g><path d="M8 3L6.5 4.5L8 6M9 3L10.5 4.5L9 6M11 4.5H13.5M8 7L6.5 8.5L8 10M9 7L10.5 8.5L9 10M6.5 10V12.5H13.5" stroke="#0000C8" stroke-width="1.1" fill="none"/></svg>
<div class="t tr" style="left:85px;top:448px;color:#000;width:82px;overflow:hidden">24 SMUD2</div>
<div class="a" style="left:55px;top:470px;width:10px;height:0;border-top:1px dotted #A0A0A0"></div>
<svg class="a" style="left:65px;top:462px" width="16" height="16"><path d="M0.5 0.5H10L14.5 5V15.5H0.5Z" fill="#fff" stroke="#202020"/><path d="M1 15H15.5M15 5V16" stroke="#000" stroke-width="1.6"/><path d="M10 0.5L14.5 5H11Z" fill="#000"/><g fill="#0000C8"><path d="M1.5 4.5L3.5 2.8V6.2Z"/><path d="M1.5 8.5L3.5 6.8V10.2Z"/><rect x="4.5" y="3" width="1" height="3"/><rect x="4.5" y="7" width="1" height="3"/></g><path d="M8 3L6.5 4.5L8 6M9 3L10.5 4.5L9 6M11 4.5H13.5M8 7L6.5 8.5L8 10M9 7L10.5 8.5L9 10M6.5 10V12.5H13.5" stroke="#0000C8" stroke-width="1.1" fill="none"/></svg>
<div class="t tr" style="left:85px;top:464px;color:#000;width:82px;overflow:hidden">25 SMSPS3</div>
<div class="a" style="left:55px;top:486px;width:10px;height:0;border-top:1px dotted #A0A0A0"></div>
<svg class="a" style="left:65px;top:478px" width="16" height="16"><path d="M0.5 0.5H10L14.5 5V15.5H0.5Z" fill="#fff" stroke="#202020"/><path d="M1 15H15.5M15 5V16" stroke="#000" stroke-width="1.6"/><path d="M10 0.5L14.5 5H11Z" fill="#000"/><g fill="#0000C8"><path d="M1.5 4.5L3.5 2.8V6.2Z"/><path d="M1.5 8.5L3.5 6.8V10.2Z"/><rect x="4.5" y="3" width="1" height="3"/><rect x="4.5" y="7" width="1" height="3"/></g><path d="M8 3L6.5 4.5L8 6M9 3L10.5 4.5L9 6M11 4.5H13.5M8 7L6.5 8.5L8 10M9 7L10.5 8.5L9 10M6.5 10V12.5H13.5" stroke="#0000C8" stroke-width="1.1" fill="none"/></svg>
<div class="t tr" style="left:85px;top:480px;color:#000;width:82px;overflow:hidden">26 SMUD3</div>
<div class="a" style="left:55px;top:502px;width:10px;height:0;border-top:1px dotted #A0A0A0"></div>
<svg class="a" style="left:65px;top:494px" width="16" height="16"><path d="M0.5 0.5H10L14.5 5V15.5H0.5Z" fill="#fff" stroke="#202020"/><path d="M1 15H15.5M15 5V16" stroke="#000" stroke-width="1.6"/><path d="M10 0.5L14.5 5H11Z" fill="#000"/><g fill="#0000C8"><path d="M1.5 4.5L3.5 2.8V6.2Z"/><path d="M1.5 8.5L3.5 6.8V10.2Z"/><rect x="4.5" y="3" width="1" height="3"/><rect x="4.5" y="7" width="1" height="3"/></g><path d="M8 3L6.5 4.5L8 6M9 3L10.5 4.5L9 6M11 4.5H13.5M8 7L6.5 8.5L8 10M9 7L10.5 8.5L9 10M6.5 10V12.5H13.5" stroke="#0000C8" stroke-width="1.1" fill="none"/></svg>
<div class="t tr" style="left:85px;top:496px;color:#000;width:82px;overflow:hidden">27 SMSPS4</div>
<div class="a" style="left:55px;top:518px;width:10px;height:0;border-top:1px dotted #A0A0A0"></div>
<svg class="a" style="left:65px;top:510px" width="16" height="16"><path d="M0.5 0.5H10L14.5 5V15.5H0.5Z" fill="#fff" stroke="#202020"/><path d="M1 15H15.5M15 5V16" stroke="#000" stroke-width="1.6"/><path d="M10 0.5L14.5 5H11Z" fill="#000"/><g fill="#0000C8"><path d="M1.5 4.5L3.5 2.8V6.2Z"/><path d="M1.5 8.5L3.5 6.8V10.2Z"/><rect x="4.5" y="3" width="1" height="3"/><rect x="4.5" y="7" width="1" height="3"/></g><path d="M8 3L6.5 4.5L8 6M9 3L10.5 4.5L9 6M11 4.5H13.5M8 7L6.5 8.5L8 10M9 7L10.5 8.5L9 10M6.5 10V12.5H13.5" stroke="#0000C8" stroke-width="1.1" fill="none"/></svg>
<div class="t tr" style="left:85px;top:512px;color:#000;width:82px;overflow:hidden">28 SMUD4</div>
<div class="a" style="left:55px;top:534px;width:10px;height:0;border-top:1px dotted #A0A0A0"></div>
<svg class="a" style="left:65px;top:526px" width="16" height="16"><path d="M0.5 0.5H10L14.5 5V15.5H0.5Z" fill="#fff" stroke="#202020"/><path d="M1 15H15.5M15 5V16" stroke="#000" stroke-width="1.6"/><path d="M10 0.5L14.5 5H11Z" fill="#000"/><g fill="#0000C8"><path d="M1.5 4.5L3.5 2.8V6.2Z"/><path d="M1.5 8.5L3.5 6.8V10.2Z"/><rect x="4.5" y="3" width="1" height="3"/><rect x="4.5" y="7" width="1" height="3"/></g><path d="M8 3L6.5 4.5L8 6M9 3L10.5 4.5L9 6M11 4.5H13.5M8 7L6.5 8.5L8 10M9 7L10.5 8.5L9 10M6.5 10V12.5H13.5" stroke="#0000C8" stroke-width="1.1" fill="none"/></svg>
<div class="t tr" style="left:85px;top:528px;color:#000;width:82px;overflow:hidden">29 SMSPS5</div>
<div class="a" style="left:55px;top:550px;width:10px;height:0;border-top:1px dotted #A0A0A0"></div>
<svg class="a" style="left:65px;top:542px" width="16" height="16"><path d="M0.5 0.5H10L14.5 5V15.5H0.5Z" fill="#fff" stroke="#202020"/><path d="M1 15H15.5M15 5V16" stroke="#000" stroke-width="1.6"/><path d="M10 0.5L14.5 5H11Z" fill="#000"/><g fill="#0000C8"><path d="M1.5 4.5L3.5 2.8V6.2Z"/><path d="M1.5 8.5L3.5 6.8V10.2Z"/><rect x="4.5" y="3" width="1" height="3"/><rect x="4.5" y="7" width="1" height="3"/></g><path d="M8 3L6.5 4.5L8 6M9 3L10.5 4.5L9 6M11 4.5H13.5M8 7L6.5 8.5L8 10M9 7L10.5 8.5L9 10M6.5 10V12.5H13.5" stroke="#0000C8" stroke-width="1.1" fill="none"/></svg>
<div class="t tr" style="left:85px;top:544px;color:#000;width:82px;overflow:hidden">30 SMUD5</div>
<div class="a" style="left:55px;top:566px;width:10px;height:0;border-top:1px dotted #A0A0A0"></div>
<svg class="a" style="left:65px;top:558px" width="16" height="16"><path d="M0.5 0.5H10L14.5 5V15.5H0.5Z" fill="#fff" stroke="#202020"/><path d="M1 15H15.5M15 5V16" stroke="#000" stroke-width="1.6"/><path d="M10 0.5L14.5 5H11Z" fill="#000"/><g fill="#0000C8"><path d="M1.5 4.5L3.5 2.8V6.2Z"/><path d="M1.5 8.5L3.5 6.8V10.2Z"/><rect x="4.5" y="3" width="1" height="3"/><rect x="4.5" y="7" width="1" height="3"/></g><path d="M8 3L6.5 4.5L8 6M9 3L10.5 4.5L9 6M11 4.5H13.5M8 7L6.5 8.5L8 10M9 7L10.5 8.5L9 10M6.5 10V12.5H13.5" stroke="#0000C8" stroke-width="1.1" fill="none"/></svg>
<div class="t tr" style="left:85px;top:560px;color:#000;width:82px;overflow:hidden">31 SMSPS6</div>
<div class="a" style="left:55px;top:582px;width:10px;height:0;border-top:1px dotted #A0A0A0"></div>
<svg class="a" style="left:65px;top:574px" width="16" height="16"><path d="M0.5 0.5H10L14.5 5V15.5H0.5Z" fill="#fff" stroke="#202020"/><path d="M1 15H15.5M15 5V16" stroke="#000" stroke-width="1.6"/><path d="M10 0.5L14.5 5H11Z" fill="#000"/><g fill="#0000C8"><path d="M1.5 4.5L3.5 2.8V6.2Z"/><path d="M1.5 8.5L3.5 6.8V10.2Z"/><rect x="4.5" y="3" width="1" height="3"/><rect x="4.5" y="7" width="1" height="3"/></g><path d="M8 3L6.5 4.5L8 6M9 3L10.5 4.5L9 6M11 4.5H13.5M8 7L6.5 8.5L8 10M9 7L10.5 8.5L9 10M6.5 10V12.5H13.5" stroke="#0000C8" stroke-width="1.1" fill="none"/></svg>
<div class="t tr" style="left:85px;top:576px;color:#000;width:82px;overflow:hidden">32 SMUD6</div>
<div class="a" style="left:55px;top:598px;width:10px;height:0;border-top:1px dotted #A0A0A0"></div>
<svg class="a" style="left:65px;top:590px" width="16" height="16"><path d="M0.5 0.5H10L14.5 5V15.5H0.5Z" fill="#fff" stroke="#202020"/><path d="M1 15H15.5M15 5V16" stroke="#000" stroke-width="1.6"/><path d="M10 0.5L14.5 5H11Z" fill="#000"/><g fill="#0000C8"><path d="M1.5 4.5L3.5 2.8V6.2Z"/><path d="M1.5 8.5L3.5 6.8V10.2Z"/><rect x="4.5" y="3" width="1" height="3"/><rect x="4.5" y="7" width="1" height="3"/></g><path d="M8 3L6.5 4.5L8 6M9 3L10.5 4.5L9 6M11 4.5H13.5M8 7L6.5 8.5L8 10M9 7L10.5 8.5L9 10M6.5 10V12.5H13.5" stroke="#0000C8" stroke-width="1.1" fill="none"/></svg>
<div class="t tr" style="left:85px;top:592px;color:#000;width:82px;overflow:hidden">35 CV1</div>
<div class="a" style="left:55px;top:614px;width:10px;height:0;border-top:1px dotted #A0A0A0"></div>
<svg class="a" style="left:65px;top:606px" width="16" height="16"><path d="M0.5 0.5H10L14.5 5V15.5H0.5Z" fill="#fff" stroke="#202020"/><path d="M1 15H15.5M15 5V16" stroke="#000" stroke-width="1.6"/><path d="M10 0.5L14.5 5H11Z" fill="#000"/><g fill="#0000C8"><path d="M1.5 4.5L3.5 2.8V6.2Z"/><path d="M1.5 8.5L3.5 6.8V10.2Z"/><rect x="4.5" y="3" width="1" height="3"/><rect x="4.5" y="7" width="1" height="3"/></g><path d="M8 3L6.5 4.5L8 6M9 3L10.5 4.5L9 6M11 4.5H13.5M8 7L6.5 8.5L8 10M9 7L10.5 8.5L9 10M6.5 10V12.5H13.5" stroke="#0000C8" stroke-width="1.1" fill="none"/></svg>
<div class="t tr" style="left:85px;top:608px;color:#000;width:82px;overflow:hidden">36 CV2</div>
<div class="a" style="left:55px;top:630px;width:10px;height:0;border-top:1px dotted #A0A0A0"></div>
<svg class="a" style="left:65px;top:622px" width="16" height="16"><path d="M0.5 0.5H10L14.5 5V15.5H0.5Z" fill="#fff" stroke="#202020"/><path d="M1 15H15.5M15 5V16" stroke="#000" stroke-width="1.6"/><path d="M10 0.5L14.5 5H11Z" fill="#000"/><g fill="#0000C8"><path d="M1.5 4.5L3.5 2.8V6.2Z"/><path d="M1.5 8.5L3.5 6.8V10.2Z"/><rect x="4.5" y="3" width="1" height="3"/><rect x="4.5" y="7" width="1" height="3"/></g><path d="M8 3L6.5 4.5L8 6M9 3L10.5 4.5L9 6M11 4.5H13.5M8 7L6.5 8.5L8 10M9 7L10.5 8.5L9 10M6.5 10V12.5H13.5" stroke="#0000C8" stroke-width="1.1" fill="none"/></svg>
<div class="t tr" style="left:85px;top:624px;color:#000;width:82px;overflow:hidden">37 CV3</div>
<div class="a" style="left:55px;top:646px;width:10px;height:0;border-top:1px dotted #A0A0A0"></div>
<svg class="a" style="left:65px;top:638px" width="16" height="16"><path d="M0.5 0.5H10L14.5 5V15.5H0.5Z" fill="#fff" stroke="#202020"/><path d="M1 15H15.5M15 5V16" stroke="#000" stroke-width="1.6"/><path d="M10 0.5L14.5 5H11Z" fill="#000"/><g fill="#0000C8"><path d="M1.5 4.5L3.5 2.8V6.2Z"/><path d="M1.5 8.5L3.5 6.8V10.2Z"/><rect x="4.5" y="3" width="1" height="3"/><rect x="4.5" y="7" width="1" height="3"/></g><path d="M8 3L6.5 4.5L8 6M9 3L10.5 4.5L9 6M11 4.5H13.5M8 7L6.5 8.5L8 10M9 7L10.5 8.5L9 10M6.5 10V12.5H13.5" stroke="#0000C8" stroke-width="1.1" fill="none"/></svg>
<div class="t tr" style="left:85px;top:640px;color:#000;width:82px;overflow:hidden">40 SHORT CHE</div>
<div class="a" style="left:55px;top:662px;width:10px;height:0;border-top:1px dotted #A0A0A0"></div>
<svg class="a" style="left:65px;top:654px" width="16" height="16"><path d="M0.5 0.5H10L14.5 5V15.5H0.5Z" fill="#fff" stroke="#202020"/><path d="M1 15H15.5M15 5V16" stroke="#000" stroke-width="1.6"/><path d="M10 0.5L14.5 5H11Z" fill="#000"/><g fill="#0000C8"><path d="M1.5 4.5L3.5 2.8V6.2Z"/><path d="M1.5 8.5L3.5 6.8V10.2Z"/><rect x="4.5" y="3" width="1" height="3"/><rect x="4.5" y="7" width="1" height="3"/></g><path d="M8 3L6.5 4.5L8 6M9 3L10.5 4.5L9 6M11 4.5H13.5M8 7L6.5 8.5L8 10M9 7L10.5 8.5L9 10M6.5 10V12.5H13.5" stroke="#0000C8" stroke-width="1.1" fill="none"/></svg>
<div class="t tr" style="left:85px;top:656px;color:#000;width:82px;overflow:hidden">41 ERR</div>
<div class="a" style="left:31px;top:674px;width:9px;height:9px;border:1px solid #A0A0A0;background:#fff"></div>
<div class="a" style="left:33px;top:678px;width:5px;height:1px;background:#000"></div>
<div class="a" style="left:35px;top:676px;width:1px;height:5px;background:#000"></div>
<div class="a" style="left:40px;top:678px;width:6px;height:0;border-top:1px dotted #A0A0A0"></div>
<svg class="a" style="left:46px;top:670px" width="16" height="16"><path d="M1.5 1.5H11L14.5 5V15.5H1.5Z" fill="#fff" stroke="#000"/><path d="M4 3H7M9 3H12M5.5 3V8L8 11M10.5 3V8L8 11V14" stroke="#8020A0" stroke-width="1.3"/><rect x="3" y="2" width="3" height="3" fill="#40A040"/><rect x="10" y="2" width="3" height="3" fill="#E0E020"/></svg>
<div class="t tr" style="left:66px;top:672px;color:#000">Device comment</div>
<div class="a" style="left:31px;top:690px;width:9px;height:9px;border:1px solid #A0A0A0;background:#fff"></div>
<div class="a" style="left:33px;top:694px;width:5px;height:1px;background:#000"></div>
<div class="a" style="left:35px;top:692px;width:1px;height:5px;background:#000"></div>
<div class="a" style="left:40px;top:694px;width:6px;height:0;border-top:1px dotted #A0A0A0"></div>
<svg class="a" style="left:46px;top:686px" width="16" height="16"><path d="M1.5 1.5H11L14.5 5V15.5H1.5Z" fill="#fff" stroke="#000"/><path d="M4 11L11 4" stroke="#30C030" stroke-width="2"/><rect x="4" y="6" width="4" height="4" fill="#A03030"/></svg>
<div class="t tr" style="left:66px;top:688px;color:#000">Parameter</div>
<div class="a" style="left:31px;top:706px;width:9px;height:9px;border:1px solid #A0A0A0;background:#fff"></div>
<div class="a" style="left:33px;top:710px;width:5px;height:1px;background:#000"></div>
<div class="a" style="left:35px;top:708px;width:1px;height:5px;background:#000"></div>
<div class="a" style="left:40px;top:710px;width:6px;height:0;border-top:1px dotted #A0A0A0"></div>
<svg class="a" style="left:46px;top:702px" width="16" height="16"><path d="M1.5 1.5H11L14.5 5V15.5H1.5Z" fill="#fff" stroke="#000"/><rect x="3" y="3" width="7" height="8" fill="none" stroke="#0000A0" stroke-width="1.3"/><path d="M4 6H8M4 8H8" stroke="#0000A0"/><rect x="9" y="10" width="4" height="4" fill="#404040"/></svg>
<div class="t tr" style="left:66px;top:704px;color:#000">Device memory</div>
<div class="a" style="left:36px;top:726px;width:10px;height:0;border-top:1px dotted #A0A0A0"></div>
<svg class="a" style="left:46px;top:718px" width="16" height="16"><path d="M1.5 1.5H11L14.5 5V15.5H1.5Z" fill="#fff" stroke="#000"/><rect x="3" y="3" width="7" height="8" fill="#40A0E0" stroke="#0000A0" stroke-width="1.3"/><path d="M4 6H8M4 8H8" stroke="#0000A0"/><rect x="9" y="10" width="4" height="4" fill="#404040"/></svg>
<div class="t tr" style="left:66px;top:720px;color:#000">Device init</div>
<div class="a" style="left:8px;top:923px;width:158px;height:18px;background:#FBFBF8"></div>
<div class="a" style="left:9px;top:924px;width:17px;height:17px;border-radius:2px;border:1px solid #fff;background:linear-gradient(135deg,#C8D6FB,#B2C6F4);box-shadow:0 0 0 0.5px #A8B8E0"></div>
<div class="a" style="left:27px;top:924px;width:64px;height:17px;border-radius:2px;border:1px solid #fff;background:linear-gradient(135deg,#C8D6FB,#B2C6F4);box-shadow:0 0 0 0.5px #A8B8E0"></div>
<div class="a" style="left:148px;top:924px;width:17px;height:17px;border-radius:2px;border:1px solid #fff;background:linear-gradient(135deg,#C8D6FB,#B2C6F4);box-shadow:0 0 0 0.5px #A8B8E0"></div>
<svg class="a" style="left:13px;top:928px" width="9" height="9"><path d="M6 1L2.5 4.5L6 8" stroke="#4D6185" stroke-width="2" fill="none"/></svg>
<svg class="a" style="left:152px;top:928px" width="9" height="9"><path d="M3 1L6.5 4.5L3 8" stroke="#4D6185" stroke-width="2" fill="none"/></svg>
<div class="a" style="left:56px;top:929px;width:7px;height:7px;background:repeating-linear-gradient(90deg,#EEF3FE 0 1px,#9FB5E8 1px 2px)"></div>
<div class="a" style="left:6px;top:944px;width:63px;height:22px;background:#ECE9D8;border:1px solid;border-color:#ECE9D8 #716F64 #716F64 #fff;border-top:none"></div>
<div class="a" style="left:69px;top:945px;width:100px;height:1px;background:#716F64"></div>
<div class="t tr" style="left:11px;top:949px;color:#000">Project</div>
<div class="a" style="left:169px;top:110px;width:1px;height:836px;background:#716F64"></div>
<div class="a" style="left:6px;top:945px;width:1px;height:1px;background:#fff"></div>
<div class="a" style="left:173px;top:83px;width:1px;height:888px;background:#fff"></div>
<div class="a" style="left:178px;top:84px;width:1101px;height:888px;background:#fff;border:1px solid;border-color:#ACA899 #fff #fff #8A8676;box-shadow:inset 1px 1px #716F64,inset 2px 0 #B8B4A4"></div>
<div class="a" style="left:0;top:971px;width:178px;height:1px;background:#ACA899"></div>
<div class="a" style="left:261px;top:86px;width:1px;height:885px;background:#000"></div>
<div class="a" style="left:1141px;top:86px;width:1px;height:885px;background:#000"></div>
<div class="a" style="left:262px;top:86px;width:71px;height:56px;background:#0000A8;box-shadow:inset 0 0 0 1px #0000A8,inset 0 0 0 2px #fff"></div>
<svg class="a" style="left:0;top:0" width="1280" height="1024"><path d="M262 114.5H332" stroke="#fff"/><path d="M332 114.5H912" stroke="#000"/><path d="M291.5 105V124 M303.5 105V124" stroke="#fff"/><rect x="292" y="113" width="11" height="2" fill="#0000A8"/><path d="M916 106.5H912.5V122.5H916" stroke="#000" fill="none"/><path d="M1134 106.5H1138.5V122.5H1134M1139 114.5H1141" stroke="#000" fill="none"/><path d="M262 170.5H1055" stroke="#000"/><path d="M291.5 161V180 M303.5 161V180" stroke="#000"/><rect x="292" y="169" width="11" height="2" fill="#fff"/><path d="M363.5 161V180 M375.5 161V180" stroke="#000"/><rect x="364" y="169" width="11" height="2" fill="#fff"/><path d="M1060.5 162 Q1053 170 1060.5 179" stroke="#000" fill="none" stroke-width="1.2"/><path d="M1134.5 162 Q1142 170 1134.5 179" stroke="#000" fill="none" stroke-width="1.2"/><path d="M1138 170.5H1141" stroke="#000"/><path d="M262 226.5H1055" stroke="#000"/><path d="M291.5 217V236 M303.5 217V236" stroke="#000"/><rect x="292" y="225" width="11" height="2" fill="#fff"/><path d="M285 236 L309 218" stroke="#000" stroke-width="1.1"/><path d="M1060.5 218 Q1053 226 1060.5 235" stroke="#000" fill="none" stroke-width="1.2"/><path d="M1134.5 218 Q1142 226 1134.5 235" stroke="#000" fill="none" stroke-width="1.2"/><path d="M1138 226.5H1141" stroke="#000"/><path d="M262 282.5H1055" stroke="#000"/><path d="M291.5 273V292 M303.5 273V292" stroke="#000"/><rect x="292" y="281" width="11" height="2" fill="#fff"/><path d="M1060.5 274 Q1053 282 1060.5 291" stroke="#000" fill="none" stroke-width="1.2"/><path d="M1134.5 274 Q1142 282 1134.5 291" stroke="#000" fill="none" stroke-width="1.2"/><path d="M1138 282.5H1141" stroke="#000"/><path d="M262 338.5H1055" stroke="#000"/><path d="M291.5 329V348 M303.5 329V348" stroke="#000"/><rect x="292" y="337" width="11" height="2" fill="#fff"/><path d="M1060.5 330 Q1053 338 1060.5 347" stroke="#000" fill="none" stroke-width="1.2"/><path d="M1134.5 330 Q1142 338 1134.5 347" stroke="#000" fill="none" stroke-width="1.2"/><path d="M1138 338.5H1141" stroke="#000"/><path d="M262 394.5H1055" stroke="#000"/><path d="M291.5 385V404 M303.5 385V404" stroke="#000"/><rect x="292" y="393" width="11" height="2" fill="#fff"/><path d="M285 404 L309 386" stroke="#000" stroke-width="1.1"/><path d="M1060.5 386 Q1053 394 1060.5 403" stroke="#000" fill="none" stroke-width="1.2"/><path d="M1134.5 386 Q1142 394 1134.5 403" stroke="#000" fill="none" stroke-width="1.2"/><path d="M1138 394.5H1141" stroke="#000"/><path d="M262 450.5H1055" stroke="#000"/><path d="M291.5 441V460 M303.5 441V460" stroke="#000"/><rect x="292" y="449" width="11" height="2" fill="#fff"/><path d="M285 460 L309 442" stroke="#000" stroke-width="1.1"/><path d="M1060.5 442 Q1053 450 1060.5 459" stroke="#000" fill="none" stroke-width="1.2"/><path d="M1134.5 442 Q1142 450 1134.5 459" stroke="#000" fill="none" stroke-width="1.2"/><path d="M1138 450.5H1141" stroke="#000"/><path d="M262 506.5H1055" stroke="#000"/><path d="M291.5 497V516 M303.5 497V516" stroke="#000"/><rect x="292" y="505" width="11" height="2" fill="#fff"/><path d="M285 516 L309 498" stroke="#000" stroke-width="1.1"/><path d="M1060.5 498 Q1053 506 1060.5 515" stroke="#000" fill="none" stroke-width="1.2"/><path d="M1134.5 498 Q1142 506 1134.5 515" stroke="#000" fill="none" stroke-width="1.2"/><path d="M1138 506.5H1141" stroke="#000"/><path d="M262 562.5H1055" stroke="#000"/><path d="M291.5 553V572 M303.5 553V572" stroke="#000"/><rect x="292" y="561" width="11" height="2" fill="#fff"/><path d="M1060.5 554 Q1053 562 1060.5 571" stroke="#000" fill="none" stroke-width="1.2"/><path d="M1134.5 554 Q1142 562 1134.5 571" stroke="#000" fill="none" stroke-width="1.2"/><path d="M1138 562.5H1141" stroke="#000"/><path d="M262 618.5H1055" stroke="#000"/><path d="M291.5 609V628 M303.5 609V628" stroke="#000"/><rect x="292" y="617" width="11" height="2" fill="#fff"/><path d="M1060.5 610 Q1053 618 1060.5 627" stroke="#000" fill="none" stroke-width="1.2"/><path d="M1134.5 610 Q1142 618 1134.5 627" stroke="#000" fill="none" stroke-width="1.2"/><path d="M1138 618.5H1141" stroke="#000"/><path d="M262 674.5H1055" stroke="#000"/><path d="M291.5 665V684 M303.5 665V684" stroke="#000"/><rect x="292" y="673" width="11" height="2" fill="#fff"/><path d="M1060.5 666 Q1053 674 1060.5 683" stroke="#000" fill="none" stroke-width="1.2"/><path d="M1134.5 666 Q1142 674 1134.5 683" stroke="#000" fill="none" stroke-width="1.2"/><path d="M1138 674.5H1141" stroke="#000"/><path d="M262 730.5H1055" stroke="#000"/><path d="M291.5 721V740 M303.5 721V740" stroke="#000"/><rect x="292" y="729" width="11" height="2" fill="#fff"/><path d="M1060.5 722 Q1053 730 1060.5 739" stroke="#000" fill="none" stroke-width="1.2"/><path d="M1134.5 722 Q1142 730 1134.5 739" stroke="#000" fill="none" stroke-width="1.2"/><path d="M1138 730.5H1141" stroke="#000"/><path d="M262 786.5H1055" stroke="#000"/><path d="M291.5 777V796 M303.5 777V796" stroke="#000"/><rect x="292" y="785" width="11" height="2" fill="#fff"/><path d="M285 796 L309 778" stroke="#000" stroke-width="1.1"/><path d="M1060.5 778 Q1053 786 1060.5 795" stroke="#000" fill="none" stroke-width="1.2"/><path d="M1134.5 778 Q1142 786 1134.5 795" stroke="#000" fill="none" stroke-width="1.2"/><path d="M1138 786.5H1141" stroke="#000"/><path d="M262 842.5H1055" stroke="#000"/><path d="M291.5 833V852 M303.5 833V852" stroke="#000"/><rect x="292" y="841" width="11" height="2" fill="#fff"/><path d="M1060.5 834 Q1053 842 1060.5 851" stroke="#000" fill="none" stroke-width="1.2"/><path d="M1134.5 834 Q1142 842 1134.5 851" stroke="#000" fill="none" stroke-width="1.2"/><path d="M1138 842.5H1141" stroke="#000"/><path d="M262 898.5H1055" stroke="#000"/><path d="M1060 890.5H1056.5V906.5H1060" stroke="#000" fill="none"/><path d="M1134 890.5H1138.5V906.5H1134M1139 898.5H1141" stroke="#000" fill="none"/><path d="M262 954.5H1055" stroke="#000"/><path d="M291.5 945V964 M303.5 945V964" stroke="#000"/><rect x="292" y="953" width="11" height="2" fill="#fff"/><path d="M285 964 L309 946" stroke="#000" stroke-width="1.1"/><path d="M1060.5 946 Q1053 954 1060.5 963" stroke="#000" fill="none" stroke-width="1.2"/><path d="M1134.5 946 Q1142 954 1134.5 963" stroke="#000" fill="none" stroke-width="1.2"/><path d="M1138 954.5H1141" stroke="#000"/></svg>
<div class="t lad" style="left:218px;top:106px;width:40px;text-align:right;color:#000">0</div><div class="t lad" style="left:277px;top:88px;color:#fff">SM400</div><div class="t lad" style="left:917px;top:106px">MOV</div><div class="t lad" style="left:981px;top:106px">K1000</div><div class="t lad" style="left:1061px;top:106px">D90</div><div class="t lad" style="left:218px;top:162px;width:40px;text-align:right;color:#000">3</div><div class="t lad" style="left:281px;top:144px;color:#000">M999</div><div class="t lad" style="left:357px;top:144px;color:#000">M40</div><div class="t lad" style="left:1061px;top:162px">M999</div><div class="t lad" style="left:218px;top:218px;width:40px;text-align:right;color:#000">6</div><div class="t lad" style="left:277px;top:200px;color:#000">SM400</div><div class="t lad" style="left:1061px;top:218px">M158</div><div class="t lad" style="left:218px;top:274px;width:40px;text-align:right;color:#000">8</div><div class="t lad" style="left:277px;top:256px;color:#000">SM400</div><div class="t lad" style="left:1061px;top:274px">M159</div><div class="t lad" style="left:218px;top:330px;width:40px;text-align:right;color:#000">10</div><div class="t lad" style="left:277px;top:312px;color:#000">SM400</div><div class="t lad" style="left:1061px;top:330px">M160</div><div class="t lad" style="left:218px;top:386px;width:40px;text-align:right;color:#000">12</div><div class="t lad" style="left:277px;top:368px;color:#000">SM400</div><div class="t lad" style="left:1061px;top:386px">M161</div><div class="t lad" style="left:218px;top:442px;width:40px;text-align:right;color:#000">14</div><div class="t lad" style="left:277px;top:424px;color:#000">SM400</div><div class="t lad" style="left:1061px;top:442px">M163</div><div class="t lad" style="left:218px;top:498px;width:40px;text-align:right;color:#000">16</div><div class="t lad" style="left:277px;top:480px;color:#000">SM400</div><div class="t lad" style="left:1061px;top:498px">M164</div><div class="t lad" style="left:218px;top:554px;width:40px;text-align:right;color:#000">18</div><div class="t lad" style="left:277px;top:536px;color:#000">SM401</div><div class="t lad" style="left:1061px;top:554px">M165</div><div class="t lad" style="left:218px;top:610px;width:40px;text-align:right;color:#000">20</div><div class="t lad" style="left:277px;top:592px;color:#000">SM401</div><div class="t lad" style="left:1061px;top:610px">M166</div><div class="t lad" style="left:218px;top:666px;width:40px;text-align:right;color:#000">22</div><div class="t lad" style="left:277px;top:648px;color:#000">SM401</div><div class="t lad" style="left:1061px;top:666px">M168</div><div class="t lad" style="left:218px;top:722px;width:40px;text-align:right;color:#000">24</div><div class="t lad" style="left:285px;top:704px;color:#000">X3F</div><div class="t lad" style="left:1061px;top:722px">M162</div><div class="t lad" style="left:218px;top:778px;width:40px;text-align:right;color:#000">26</div><div class="t lad" style="left:277px;top:760px;color:#000">SM401</div><div class="t lad" style="left:1061px;top:778px">M167</div><div class="t lad" style="left:218px;top:834px;width:40px;text-align:right;color:#000">28</div><div class="t lad" style="left:277px;top:816px;color:#000">SM400</div><div class="t lad" style="left:1061px;top:834px">M169</div><div class="t lad" style="left:218px;top:890px;width:40px;text-align:right;color:#000">30</div><div class="t lad" style="left:1061px;top:890px">NOPLF</div><div class="t lad" style="left:218px;top:946px;width:40px;text-align:right;color:#000">31</div><div class="t lad" style="left:277px;top:928px;color:#000">SM401</div><div class="t lad" style="left:1061px;top:946px">T0</div><div class="t lad" style="left:1085px;top:928px">K10</div>
<div class="a" style="left:1260px;top:86px;width:18px;height:885px;background:#F5F4EC;box-shadow:inset 1px 0 #EDEBE0"></div>
<div class="a" style="left:1260px;top:87px;width:17px;height:17px;border-radius:2px;border:1px solid #fff;background:linear-gradient(135deg,#C8D6FB,#B2C6F4);box-shadow:0 0 0 0.5px #A8B8E0"></div>
<div class="a" style="left:1260px;top:105px;width:17px;height:18px;border-radius:2px;border:1px solid #fff;background:linear-gradient(135deg,#C8D6FB,#B2C6F4);box-shadow:0 0 0 0.5px #A8B8E0"></div>
<div class="a" style="left:1260px;top:953px;width:17px;height:17px;border-radius:2px;border:1px solid #fff;background:linear-gradient(135deg,#C8D6FB,#B2C6F4);box-shadow:0 0 0 0.5px #A8B8E0"></div>
<svg class="a" style="left:1264px;top:91px" width="10" height="8"><path d="M1 6L5 2L9 6" stroke="#4D6185" stroke-width="2" fill="none"/></svg>
<svg class="a" style="left:1264px;top:958px" width="10" height="8"><path d="M1 2L5 6L9 2" stroke="#4D6185" stroke-width="2" fill="none"/></svg>
<div class="a" style="left:1265px;top:110px;width:8px;height:7px;background:repeating-linear-gradient(180deg,#EEF3FE 0 1px,#9FB5E8 1px 2px)"></div>
<div class="t tr" style="left:2px;top:978px;color:#000">Ready</div>
<div class="sunk" style="left:659px;top:976px;width:85px;height:17px"></div>
<div class="t tr" style="left:661px;top:978px;color:#000">Q10UDEH</div>
<div class="sunk" style="left:747px;top:976px;width:155px;height:17px"></div>
<div class="t tr" style="left:749px;top:978px;color:#000">Host station</div>
<div class="sunk" style="left:917px;top:976px;width:96px;height:17px"></div>
<div class="sunk" style="left:1016px;top:976px;width:75px;height:17px"></div>
<div class="sunk" style="left:1094px;top:976px;width:55px;height:17px"></div>
<div class="sunk" style="left:1152px;top:976px;width:33px;height:17px"></div>
<div class="sunk" style="left:1188px;top:976px;width:26px;height:17px"></div>
<div class="sunk" style="left:1217px;top:976px;width:26px;height:17px"></div>
<div class="t tr" style="left:1219px;top:978px;color:#000">NUM</div>
<div class="sunk" style="left:1246px;top:976px;width:34px;height:17px"></div>
<div class="a" style="left:0;top:994px;width:1280px;height:30px;background:linear-gradient(#3168D5 0,#4993E6 1px,#2157D7 3px,#2663E0 6px,#2663E0 24px,#1941A5 30px)"></div>
<div class="a" style="left:0;top:994px;width:100px;height:30px;border-radius:0 12px 12px 0;background:linear-gradient(#3C8E3C 0,#5EBC5E 3px,#3C9A3C 8px,#3A933A 22px,#2F7A2F 30px);box-shadow:inset -2px 0 3px rgba(0,40,0,.5)"></div>
<svg class="a" style="left:10px;top:1000px" width="20" height="19"><path d="M2 3Q5 1 9 3L8 9Q5 7 2 9Z" fill="#E8501C"/><path d="M10 3Q14 5 18 3L17 9Q13 11 9 9Z" fill="#5DB524"/><path d="M2 10Q5 8 8 10L7 16Q4 14 1 16Z" fill="#2E7BE0"/><path d="M9 10Q13 12 17 10L16 16Q12 18 8 16Z" fill="#F4C010"/></svg>
<svg class="a" style="left:34px;top:998px" width="50" height="22"><g transform="translate(3,0) skewX(-14)" stroke="#F4F4E8" stroke-width="1.3" fill="none" stroke-linecap="round"><path d="M5 3H19M2 10H21M9 3V10Q8 16 3 19M16 3V19"/><path d="M28 2L25 10L32 17M24 7H33Q31 15 25 19M38 2L35 8H43M41 5L43 8M35 11H43V18H35Z"/></g></svg>
<svg class="a" style="left:112px;top:1000px" width="18" height="18"><path d="M3 3Q9 0 15 3L14 15Q8 17 2 15Z" fill="#EAF6FF" stroke="#1A3A80" stroke-width="1.2"/><path d="M5 7Q9 4 13 7" stroke="#3A80D0" stroke-width="2" fill="none"/><path d="M6 12L12 6" stroke="#204070" stroke-width="1.5"/><path d="M12 5L15 3" stroke="#E08020" stroke-width="1.5"/></svg>
<svg class="a" style="left:136px;top:1000px" width="18" height="18"><path d="M1.5 3.5L6 1.5H14.5L16.5 6V16.5H3Z" fill="#F0F4FA" stroke="#8090B0"/><circle cx="7.5" cy="7" r="4.5" fill="#C8E4FF" stroke="#2060B0" stroke-width="1.6"/><path d="M10.5 10.5L14 14.5" stroke="#D0A020" stroke-width="2.6"/></svg>
<svg class="a" style="left:159px;top:1000px" width="16" height="18"><ellipse cx="8" cy="9" rx="5.5" ry="7" fill="none" stroke="#E01818" stroke-width="3.6"/></svg>
<svg class="a" style="left:182px;top:999px" width="17" height="19"><ellipse cx="8.5" cy="9.5" rx="6" ry="7.5" fill="#101018"/><ellipse cx="8.5" cy="12" rx="4.5" ry="5" fill="#fff"/><ellipse cx="8.5" cy="6" rx="3" ry="1.6" fill="#F0B020"/><circle cx="6.5" cy="4" r="1.2" fill="#fff"/><circle cx="10.5" cy="4" r="1.2" fill="#fff"/><path d="M3 9H14L12 11H5Z" fill="#E02020"/><path d="M4 17H8M9 17H13" stroke="#F0A020" stroke-width="2"/></svg>
<div class="a" style="left:223px;top:998px;width:156px;height:24px;border-radius:3px;background:linear-gradient(#5E9BF8 0,#3E84F4 3px,#3A80F3 20px,#2E6FE0 25px);box-shadow:inset -1px -1px #2A5AC8, inset 1px 1px #7AB0FF"></div>
<div class="a" style="left:232px;top:1003px;width:16px;height:13px;border-radius:2px;background:linear-gradient(#FFF0A0,#E8B840);border:1px solid #B08020"></div>
<div class="t tr" style="left:250px;top:1002px;color:#fff">MITSUBISHI</div>
<div class="a" style="left:382px;top:998px;width:156px;height:24px;border-radius:3px;background:linear-gradient(#5E9BF8 0,#3E84F4 3px,#3A80F3 20px,#2E6FE0 25px);box-shadow:inset -1px -1px #2A5AC8, inset 1px 1px #7AB0FF"></div>
<div class="a" style="left:391px;top:1002px;width:14px;height:16px;border-radius:50%;border:3.5px solid #D01010"></div>
<div class="t tr" style="left:409px;top:1002px;color:#fff">GX Developer ...</div>
<div class="a" style="left:543px;top:998px;width:156px;height:24px;border-radius:3px;background:linear-gradient(#5E9BF8 0,#3E84F4 3px,#3A80F3 20px,#2E6FE0 25px);box-shadow:inset -1px -1px #2A5AC8, inset 1px 1px #7AB0FF"></div>
<div class="a" style="left:552px;top:1002px;width:16px;height:16px;background:linear-gradient(135deg,#fff 40%,#F0A040 50%,#fff 60%);border:1px solid #909090"></div>
<div class="t tr" style="left:570px;top:1002px;color:#fff">GX Developer ...</div>
<div class="a" style="left:702px;top:998px;width:158px;height:24px;border-radius:3px;background:linear-gradient(#1E4FB4,#1F55C0 4px,#1E52B7);box-shadow:inset 1px 1px 2px #0A2A80"></div>
<svg class="a" style="left:711px;top:1002px" width="17" height="17"><path d="M5 0.5H12L16.5 5V12L12 16.5H5L0.5 12V5Z" fill="#100808"/><path d="M4 2H8.5V15H6L2 11V5Z" fill="#E01010"/><path d="M9 8H16V11L13 14H9Z" fill="#F4F0EC"/><rect x="9.5" y="9" width="2" height="5" fill="#7080A0"/><circle cx="14" cy="10" r="1" fill="#101010"/><path d="M12 12.5L14 14" stroke="#C08020" stroke-width="1.5"/><path d="M10 4L13 6" stroke="#80C080"/></svg>
<div class="t tr" style="left:731px;top:1003px;color:#fff">MELSOFT serie...</div>
<div class="t tr" style="left:1119px;top:1001px;color:#fff">CH</div>
<div class="a" style="left:1141px;top:1004px;width:16px;height:11px;background:repeating-linear-gradient(90deg,#fff 0 1px,#404040 1px 2px);border:1px solid #202020"></div>
<div class="a" style="left:1163px;top:1002px;width:15px;height:15px;background:#FFFFC0;border:1px solid #202020;font:bold 12px 'Liberation Sans';line-height:13px;text-align:center;color:#000">?</div>
<div class="a" style="left:1189px;top:1001px;width:8px;height:6px;border:1px solid #fff"></div>
<svg class="a" style="left:1189px;top:1010px" width="9" height="6"><path d="M1 1H8L4.5 5Z" fill="#fff"/></svg>
<div class="a" style="left:1215px;top:994px;width:65px;height:30px;background:linear-gradient(#1290E8 0,#20A8F0 2px,#0F97EA 10px,#0B85DA 30px);border-left:1px solid #1060C0"></div>
<div class="a" style="left:1206px;top:1001px;width:18px;height:18px;border-radius:50%;background:radial-gradient(circle at 40% 35%,#9CCFFF,#3A86E8);border:1px solid #E0F0FF"></div>
<svg class="a" style="left:1210px;top:1005px" width="10" height="10"><path d="M6.5 1.5L3 5L6.5 8.5" stroke="#fff" stroke-width="2" fill="none"/></svg>
<div class="t tr" style="left:1231px;top:1002px;color:#fff">20:50</div>
<div class="a" style="left:332px;top:246px;width:617px;height:503px;border-radius:7px 7px 0 0;background:#0831D9;box-shadow:inset 1px 0 #001EA0,inset -1px 0 #001EA0,inset 0 -1px #001EA0"></div>
<div class="a" style="left:332px;top:246px;width:617px;height:33px;border-radius:7px 7px 0 0;background:linear-gradient(#0058EE 0,#3D95FF 2px,#0A66F5 5px,#0058E8 12px,#0055E5 24px,#0049D0 30px,#003DC0 33px)"></div>
<div class="a" style="left:333px;top:279px;width:3px;height:467px;background:linear-gradient(90deg,#0A50E0,#1A6AF8,#0A58EA)"></div>
<div class="a" style="left:945px;top:279px;width:3px;height:467px;background:linear-gradient(90deg,#0A58EA,#0040C8,#002AA8)"></div>
<div class="a" style="left:333px;top:745px;width:615px;height:3px;background:linear-gradient(#0A58EA,#0030B0,#001EA0)"></div>
<div class="a" style="left:336px;top:279px;width:610px;height:467px;background:#ECE9D8"></div>
<div class="t" style="left:339px;top:253px;line-height:24px;font-size:20px;letter-spacing:-1px;font-weight:bold;color:#fff;text-shadow:1px 1px #0A1E80">Sampling trace</div>
<div class="a" style="left:919px;top:251px;width:25px;height:25px;border-radius:3px;border:1px solid #fff;background:radial-gradient(circle at 30% 30%,#F2A080,#E0502A 60%,#C83A10)"></div>
<svg class="a" style="left:919px;top:251px" width="25" height="25"><path d="M7 7L18 18M18 7L7 18" stroke="#fff" stroke-width="2.6"/></svg>
<div class="a" style="left:340px;top:290px;width:12px;height:12px;border-radius:50%;background:#fff;border:1px solid;border-color:#808080 #fff #fff #808080"></div>
<div class="a" style="left:344px;top:294px;width:4px;height:4px;border-radius:50%;background:#000"></div>
<div class="t df" style="left:358px;top:290px;line-height:12px;color:#000">Wizard setting/executi</div>
<div class="a" style="left:340px;top:340px;width:12px;height:12px;border-radius:50%;background:#fff;border:1px solid;border-color:#808080 #fff #fff #808080"></div>
<div class="t df" style="left:358px;top:340px;line-height:12px;color:#000">Individual setting/exe</div>
<div class="grp" style="left:493px;top:285px;width:449px;height:38px"></div>
<div class="raised" style="left:502px;top:293px;width:95px;height:23px;display:flex;justify-content:center;align-items:center;overflow:hidden"><span class="df" style="white-space:pre;line-height:12px;color:#000">Trace setting...</span></div>
<svg class="a" style="left:608px;top:296px" width="16" height="13"><path d="M1 6.5H7M9 2L14 6.5L9 11" stroke="#000" stroke-width="1.2" fill="none"/></svg>
<div class="raised" style="left:632px;top:293px;width:95px;height:23px;display:flex;justify-content:center;align-items:center;overflow:hidden"><span class="df" style="white-space:pre;line-height:12px;color:#000">Trace execution...</span></div>
<svg class="a" style="left:744px;top:296px" width="16" height="13"><path d="M1 6.5H7M9 2L14 6.5L9 11" stroke="#000" stroke-width="1.2" fill="none"/></svg>
<div class="raised" style="left:776px;top:293px;width:95px;height:23px;display:flex;justify-content:center;align-items:center;overflow:hidden"><span class="df" style="white-space:pre;line-height:12px;color:#000">Trace result...</span></div>
<div class="grp" style="left:493px;top:331px;width:449px;height:112px"></div>
<div class="grp" style="left:502px;top:342px;width:197px;height:68px"></div>
<div class="gl df dis" style="left:509px;top:336px;color:#ACA899">Trace data(setting+result) storage</div>
<div class="t df dis" style="left:505px;top:357px;line-height:12px;color:#ACA899">Target</div>
<div class="t df dis" style="left:505px;top:369px;line-height:12px;color:#ACA899">memory</div>
<div class="t df dis" style="left:505px;top:389px;line-height:12px;color:#ACA899">File</div>
<div class="a" style="left:560px;top:360px;width:132px;height:18px;background:#ECE9D8;border:1px solid;border-color:#ACA899 #fff #fff #ACA899;box-shadow:inset 1px 1px #716F64"></div>
<div class="raised" style="left:673px;top:362px;width:17px;height:14px"></div>
<svg class="a" style="left:677px;top:367px" width="9" height="6"><path d="M1 0H8L4.5 4Z" fill="#ACA899"/></svg>
<div class="t df dis" style="left:562px;top:363px;line-height:12px;color:#ACA899">Memory card(RAM)</div>
<div class="a" style="left:560px;top:383px;width:132px;height:18px;background:#ECE9D8;border:1px solid;border-color:#ACA899 #fff #fff #ACA899;box-shadow:inset 1px 1px #716F64"></div>
<div class="raised" style="left:673px;top:385px;width:17px;height:14px"></div>
<svg class="a" style="left:677px;top:390px" width="9" height="6"><path d="M1 0H8L4.5 4Z" fill="#ACA899"/></svg>
<div class="t df dis" style="left:562px;top:386px;line-height:12px;color:#ACA899">01</div>
<div class="grp" style="left:705px;top:342px;width:228px;height:68px"></div>
<div class="gl df dis" style="left:711px;top:336px;color:#ACA899">Trace execution method</div>
<div class="a" style="left:710px;top:357px;width:12px;height:12px;border-radius:50%;background:#ECE9D8;border:1px solid;border-color:#ACA899 #fff #fff #ACA899"></div>
<div class="a" style="left:714px;top:361px;width:4px;height:4px;border-radius:50%;background:#ACA899"></div>
<div class="t df dis" style="left:727px;top:354px;line-height:12px;color:#ACA899">Execute trace after overwriting</div>
<div class="t df dis" style="left:727px;top:366px;line-height:12px;color:#ACA899">the current trace settings to</div>
<div class="a" style="left:710px;top:385px;width:12px;height:12px;border-radius:50%;background:#ECE9D8;border:1px solid;border-color:#ACA899 #fff #fff #ACA899"></div>
<div class="t df dis" style="left:727px;top:381px;line-height:12px;color:#ACA899">Execute trace for the settings</div>
<div class="t df dis" style="left:727px;top:393px;line-height:12px;color:#ACA899">written in PLC.</div>
<div class="raised" style="left:502px;top:416px;width:135px;height:23px;display:flex;justify-content:center;align-items:center;overflow:hidden"><span class="df dis" style="white-space:pre;line-height:12px;color:#ACA899">Trace condition settings...</span></div>
<div class="raised" style="left:650px;top:416px;width:135px;height:23px;display:flex;justify-content:center;align-items:center;overflow:hidden"><span class="df dis" style="white-space:pre;line-height:12px;color:#ACA899">Trace data settings...</span></div>
<div class="raised" style="left:817px;top:416px;width:117px;height:23px;display:flex;justify-content:center;align-items:center;overflow:hidden"><span class="df dis" style="white-space:pre;line-height:12px;color:#ACA899">Trace execution...</span></div>
<div class="grp" style="left:341px;top:452px;width:601px;height:231px"></div>
<div class="gl df" style="left:348px;top:446px;color:#000">Trace setting</div>
<div class="grp" style="left:345px;top:470px;width:399px;height:208px"></div>
<div class="gl df" style="left:352px;top:464px;color:#000">Trace condition settings</div>
<div class="grp" style="left:354px;top:485px;width:165px;height:54px"></div>
<div class="gl df" style="left:361px;top:479px;color:#000">No.of traces</div>
<div class="t df" style="left:362px;top:498px;line-height:12px;color:#000">No.of times</div>
<div class="t df" style="left:479px;top:498px;line-height:12px;color:#000">Times</div>
<div class="t df" style="left:362px;top:510px;line-height:12px;color:#000">After trigger</div>
<div class="t df" style="left:362px;top:522px;line-height:12px;color:#000">number of</div>
<div class="t df" style="left:479px;top:519px;line-height:12px;color:#000">Times</div>
<div class="grp" style="left:527px;top:486px;width:212px;height:53px"></div>
<div class="gl df" style="left:534px;top:480px;color:#000">Trace additional information</div>
<div class="grp" style="left:354px;top:549px;width:385px;height:44px"></div>
<div class="gl df" style="left:361px;top:543px;color:#000">Trace point setup</div>
<div class="t df" style="left:362px;top:561px;line-height:12px;color:#000">Each scan</div>
<div class="grp" style="left:354px;top:605px;width:385px;height:46px"></div>
<div class="gl df" style="left:361px;top:599px;color:#000">Trigger point setup</div>
<div class="t df" style="left:362px;top:618px;line-height:12px;color:#000">At the time of TRACE instruction execution</div>
<div class="t df" style="left:355px;top:661px;line-height:12px;color:#000">Do not auto start</div>
<div class="grp" style="left:750px;top:471px;width:187px;height:207px"></div>
<div class="gl df" style="left:757px;top:465px;color:#000">Trace data settings</div>
<div class="grp" style="left:755px;top:489px;width:178px;height:27px"></div>
<div class="gl df dis" style="left:762px;top:483px;color:#ACA899">Setup no.of device points</div>
<div class="grp" style="left:755px;top:528px;width:178px;height:28px"></div>
<div class="gl df dis" style="left:762px;top:522px;color:#ACA899">File register to be used</div>
<div class="t df dis" style="left:799px;top:540px;line-height:12px;color:#ACA899">-</div>
<div class="t df dis" style="left:847px;top:540px;line-height:12px;color:#ACA899">Block</div>
<div class="grp" style="left:755px;top:574px;width:177px;height:77px"></div>
<div class="gl df" style="left:762px;top:568px;color:#000">Device specification</div>
<div class="t df" style="left:763px;top:594px;line-height:12px;color:#000">Bit device  No setting</div>
<div class="t df" style="left:763px;top:624px;line-height:12px;color:#000">Word device No setting</div>
<div class="grp" style="left:340px;top:696px;width:292px;height:42px"></div>
<div class="gl df" style="left:347px;top:690px;color:#000">Trace settings file operation</div>
<div class="raised" style="left:349px;top:708px;width:77px;height:23px;display:flex;justify-content:center;align-items:center;overflow:hidden"><span class="df" style="white-space:pre;line-height:12px;color:#000">Read file...</span></div>
<div class="raised" style="left:443px;top:708px;width:77px;height:23px;display:flex;justify-content:center;align-items:center;overflow:hidden"><span class="df" style="white-space:pre;line-height:12px;color:#000">Write file...</span></div>
<div class="raised" style="left:538px;top:708px;width:77px;height:23px;display:flex;justify-content:center;align-items:center;overflow:hidden"><span class="df" style="white-space:pre;line-height:12px;color:#000">Delete file...</span></div>
<div class="grp" style="left:641px;top:697px;width:211px;height:41px"></div>
<div class="gl df dis" style="left:648px;top:691px;color:#ACA899">Trace settings PLC operation</div>
<div class="raised" style="left:650px;top:708px;width:90px;height:22px;display:flex;justify-content:center;align-items:center;overflow:hidden"><span class="df dis" style="white-space:pre;line-height:12px;color:#ACA899">Read from PLC</span></div>
<div class="raised" style="left:754px;top:708px;width:90px;height:22px;display:flex;justify-content:center;align-items:center;overflow:hidden"><span class="df dis" style="white-space:pre;line-height:12px;color:#ACA899">Write to PLC</span></div>
<div class="a" style="left:862px;top:713px;width:77px;height:23px;border:1px solid #000"></div>
<div class="raised" style="left:863px;top:714px;width:75px;height:21px;display:flex;justify-content:center;align-items:center;overflow:hidden"><span class="df" style="white-space:pre;line-height:12px;color:#000">Close</span></div>
</body></html>
